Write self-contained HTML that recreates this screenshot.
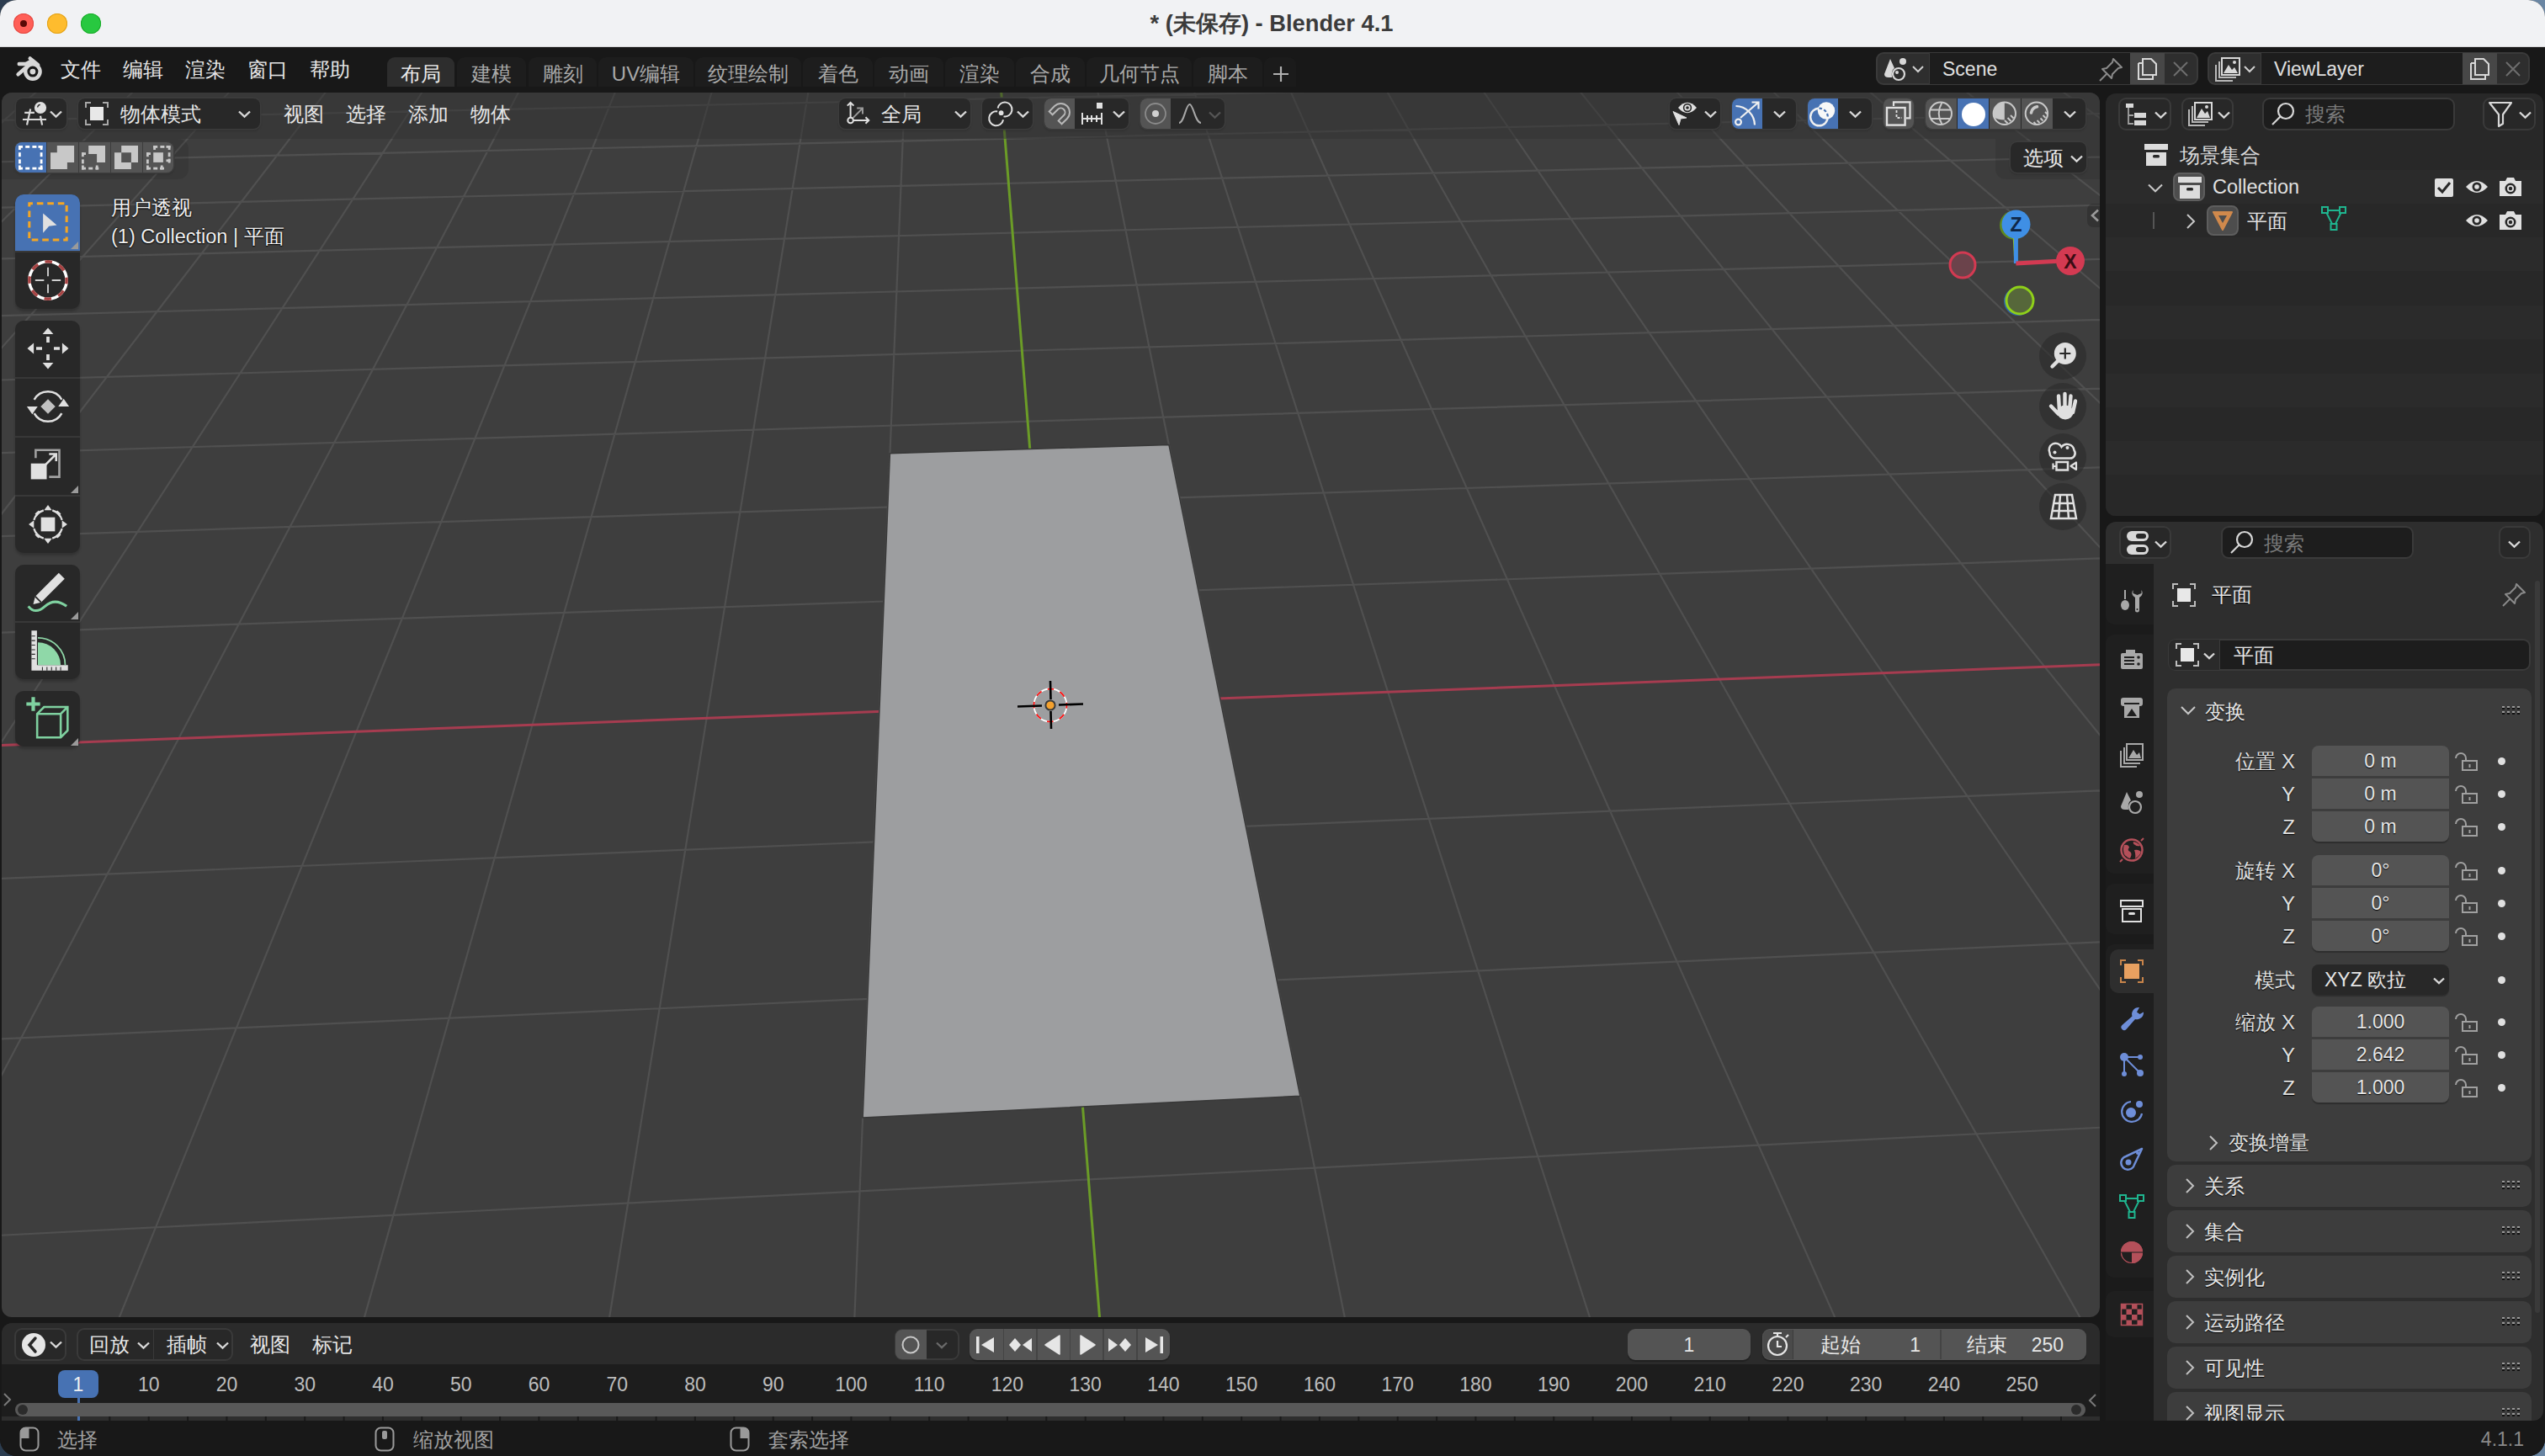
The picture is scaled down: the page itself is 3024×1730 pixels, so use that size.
<!DOCTYPE html>
<html><head><meta charset="utf-8"><style>
html,body{margin:0;padding:0;}
body{width:3024px;height:1730px;overflow:hidden;position:relative;background:linear-gradient(90deg,#2c3d50 0%,#4d6480 50%,#6a86a3 100%);font-family:"Liberation Sans",sans-serif;}
.a{position:absolute;box-sizing:border-box;}
.t{white-space:nowrap;}
.c{font-size:1.3em;vertical-align:-0.06em;}
svg{position:absolute;overflow:visible;}
</style></head><body>
<div class="a" id="win" style="left:0;top:0;width:3024px;height:1730px;border-radius:20px;overflow:hidden;background:#181818;">
<div class="a" style="left:0px;top:0px;width:3024px;height:56px;background:#f1f2f4;"></div>
<div class="a" style="left:0px;top:55px;width:3024px;height:1px;background:#d6d6d8;"></div>
<div class="a" style="left:16px;top:16px;width:24px;height:24px;border-radius:50%;background:#ff5f57;box-shadow:inset 0 0 0 1px #e2463f;"></div>
<div class="a" style="left:56px;top:16px;width:24px;height:24px;border-radius:50%;background:#febc2e;box-shadow:inset 0 0 0 1px #e1a116;"></div>
<div class="a" style="left:96px;top:16px;width:24px;height:24px;border-radius:50%;background:#28c840;box-shadow:inset 0 0 0 1px #1aab29;"></div>
<div class="a" style="left:24px;top:24px;width:8px;height:8px;border-radius:50%;background:#5a0a06;"></div>
<div class="a t" style="left:1111px;width:800px;text-align:center;top:9.0px;height:38px;line-height:38px;font-size:27.3px;color:#3b3b3b;font-weight:bold;">* (<span class="c">未保存</span>) - Blender 4.1</div>
<svg style="left:0px;top:56px" width="60" height="50" viewBox="0 56 60 50">
<path d="M35.7 69.4L45 77M22.7 76H38M21.5 88.4L30 81" stroke="#d8d8d8" stroke-width="4.4" stroke-linecap="round"/>
<path d="M30 74L37 70L48 78L36 80L29 84Z" fill="#d8d8d8"/>
<circle cx="38.9" cy="85.1" r="8.7" fill="#181818" stroke="#d8d8d8" stroke-width="4.4"/>
<circle cx="38.9" cy="85.1" r="3.4" fill="#d8d8d8"/>
</svg>
<div class="a t" style="left:72px;top:65.5px;height:33px;line-height:33px;font-size:24px;color:#e6e6e6;"><span class="c">文件</span></div>
<div class="a t" style="left:146px;top:65.5px;height:33px;line-height:33px;font-size:24px;color:#e6e6e6;"><span class="c">编辑</span></div>
<div class="a t" style="left:220px;top:65.5px;height:33px;line-height:33px;font-size:24px;color:#e6e6e6;"><span class="c">渲染</span></div>
<div class="a t" style="left:294px;top:65.5px;height:33px;line-height:33px;font-size:24px;color:#e6e6e6;"><span class="c">窗口</span></div>
<div class="a t" style="left:368px;top:65.5px;height:33px;line-height:33px;font-size:24px;color:#e6e6e6;"><span class="c">帮助</span></div>
<div class="a" style="left:460px;top:68px;width:80px;height:35px;background:#2d2d2d;border-radius:9px 9px 0 0;"></div>
<div class="a t" style="left:100.0px;width:800px;text-align:center;top:70.5px;height:33px;line-height:33px;font-size:24px;color:#ebebeb;"><span class="c">布局</span></div>
<div class="a" style="left:543px;top:68px;width:82px;height:35px;background:#1d1d1d;border-radius:9px 9px 0 0;"></div>
<div class="a t" style="left:184.0px;width:800px;text-align:center;top:70.5px;height:33px;line-height:33px;font-size:24px;color:#a9a9a9;"><span class="c">建模</span></div>
<div class="a" style="left:628px;top:68px;width:81px;height:35px;background:#1d1d1d;border-radius:9px 9px 0 0;"></div>
<div class="a t" style="left:268.5px;width:800px;text-align:center;top:70.5px;height:33px;line-height:33px;font-size:24px;color:#a9a9a9;"><span class="c">雕刻</span></div>
<div class="a" style="left:711px;top:68px;width:113px;height:35px;background:#1d1d1d;border-radius:9px 9px 0 0;"></div>
<div class="a t" style="left:367.5px;width:800px;text-align:center;top:70.5px;height:33px;line-height:33px;font-size:24px;color:#a9a9a9;">UV<span class="c">编辑</span></div>
<div class="a" style="left:826px;top:68px;width:126px;height:35px;background:#1d1d1d;border-radius:9px 9px 0 0;"></div>
<div class="a t" style="left:489.0px;width:800px;text-align:center;top:70.5px;height:33px;line-height:33px;font-size:24px;color:#a9a9a9;"><span class="c">纹理绘制</span></div>
<div class="a" style="left:954px;top:68px;width:83px;height:35px;background:#1d1d1d;border-radius:9px 9px 0 0;"></div>
<div class="a t" style="left:595.5px;width:800px;text-align:center;top:70.5px;height:33px;line-height:33px;font-size:24px;color:#a9a9a9;"><span class="c">着色</span></div>
<div class="a" style="left:1039px;top:68px;width:82px;height:35px;background:#1d1d1d;border-radius:9px 9px 0 0;"></div>
<div class="a t" style="left:680.0px;width:800px;text-align:center;top:70.5px;height:33px;line-height:33px;font-size:24px;color:#a9a9a9;"><span class="c">动画</span></div>
<div class="a" style="left:1123px;top:68px;width:82px;height:35px;background:#1d1d1d;border-radius:9px 9px 0 0;"></div>
<div class="a t" style="left:764.0px;width:800px;text-align:center;top:70.5px;height:33px;line-height:33px;font-size:24px;color:#a9a9a9;"><span class="c">渲染</span></div>
<div class="a" style="left:1207px;top:68px;width:82px;height:35px;background:#1d1d1d;border-radius:9px 9px 0 0;"></div>
<div class="a t" style="left:848.0px;width:800px;text-align:center;top:70.5px;height:33px;line-height:33px;font-size:24px;color:#a9a9a9;"><span class="c">合成</span></div>
<div class="a" style="left:1291px;top:68px;width:125px;height:35px;background:#1d1d1d;border-radius:9px 9px 0 0;"></div>
<div class="a t" style="left:953.5px;width:800px;text-align:center;top:70.5px;height:33px;line-height:33px;font-size:24px;color:#a9a9a9;"><span class="c">几何节点</span></div>
<div class="a" style="left:1418px;top:68px;width:82px;height:35px;background:#1d1d1d;border-radius:9px 9px 0 0;"></div>
<div class="a t" style="left:1059.0px;width:800px;text-align:center;top:70.5px;height:33px;line-height:33px;font-size:24px;color:#a9a9a9;"><span class="c">脚本</span></div>
<div class="a" style="left:1502px;top:68px;width:38px;height:35px;background:#1b1b1b;border-radius:9px 9px 0 0;"></div>
<svg style="left:1512px;top:78px" width="20" height="20"><path d="M10 1V19M1 10H19" stroke="#b0b0b0" stroke-width="2.2"/></svg>
<div class="a" style="left:2229px;top:62px;width:383px;height:39px;background:#2e2e2e;border-radius:9px;border:2px solid #3a3a3a;"></div>
<div class="a" style="left:2292px;top:63px;width:239px;height:37px;background:#1d1d1d;border-left:1px solid #3a3a3a;"></div>
<div class="a" style="left:2531px;top:63px;width:41px;height:37px;background:#474747;"></div>
<div class="a t" style="left:2308px;top:66.0px;height:32px;line-height:32px;font-size:23px;color:#e0e0e0;">Scene</div>
<svg style="left:2237px;top:68px" width="32" height="30" viewBox="0 0 32 30"><path d="M9 2L2 20Q2 24 7 24L11 24Q10 15 14 13Z" fill="#d8d8d8"/><circle cx="24" cy="5" r="4" fill="#d8d8d8"/><circle cx="19" cy="20" r="7" fill="none" stroke="#d8d8d8" stroke-width="2.2"/><circle cx="17" cy="18" r="2" fill="#d8d8d8"/></svg>
<svg style="left:2539px;top:68px" width="26" height="28" viewBox="0 0 26 28"><path d="M2 7H7M2 7V26H19V21" fill="none" stroke="#d8d8d8" stroke-width="2"/><path d="M7 2H17L23 8V21H7Z" fill="none" stroke="#d8d8d8" stroke-width="2"/></svg>
<svg style="left:2582px;top:73px" width="18" height="18"><path d="M1 1L17 17M17 1L1 17" stroke="#6e6e6e" stroke-width="2"/></svg>
<svg style="left:2272px;top:78px" width="14" height="9"><path d="M1 1L7 7L13 1" fill="none" stroke="#d0d0d0" stroke-width="2"/></svg>
<svg style="left:2493px;top:68px" width="30" height="30" viewBox="0 0 30 30"><path d="M2 28L11 19" stroke="#8a8a8a" stroke-width="2"/><path d="M10 13L17 6L18 2L28 12L24 13L17 20L16 25L5 14Z" fill="none" stroke="#8a8a8a" stroke-width="2" stroke-linejoin="round"/></svg>
<div class="a" style="left:2623px;top:62px;width:383px;height:39px;background:#2e2e2e;border-radius:9px;border:2px solid #3a3a3a;"></div>
<div class="a" style="left:2686px;top:63px;width:240px;height:37px;background:#1d1d1d;border-left:1px solid #3a3a3a;"></div>
<div class="a" style="left:2926px;top:63px;width:41px;height:37px;background:#474747;"></div>
<div class="a t" style="left:2702px;top:66.0px;height:32px;line-height:32px;font-size:23px;color:#e0e0e0;">ViewLayer</div>
<svg style="left:2631px;top:67px" width="32" height="32" viewBox="0 0 32 32"><rect x="9" y="2" width="21" height="20" fill="none" stroke="#d8d8d8" stroke-width="2"/><path d="M11 20L17 10L21 16L24 13L28 20Z" fill="#d8d8d8"/><circle cx="24" cy="7" r="2" fill="#d8d8d8"/><path d="M6 6V25H26M2 10V29H22" fill="none" stroke="#b8b8b8" stroke-width="2"/></svg>
<svg style="left:2934px;top:68px" width="26" height="28" viewBox="0 0 26 28"><path d="M2 7H7M2 7V26H19V21" fill="none" stroke="#d8d8d8" stroke-width="2"/><path d="M7 2H17L23 8V21H7Z" fill="none" stroke="#d8d8d8" stroke-width="2"/></svg>
<svg style="left:2977px;top:73px" width="18" height="18"><path d="M1 1L17 17M17 1L1 17" stroke="#6e6e6e" stroke-width="2"/></svg>
<svg style="left:2666px;top:78px" width="14" height="9"><path d="M1 1L7 7L13 1" fill="none" stroke="#d0d0d0" stroke-width="2"/></svg>
<svg style="left:0;top:0" width="3024" height="1730"><defs><clipPath id="vpc"><rect x="2" y="110" width="2493" height="1455" rx="12"/></clipPath></defs><rect x="2" y="110" width="2493" height="1455" rx="12" fill="#3e3e3e"/><g clip-path="url(#vpc)"><path d="M-24793.3 10213.6L193.8 -444.1M-22724.7 9885.7L242.3 -444.5M-20775.3 9576.6L290.7 -444.9M-18935.2 9284.9L339.0 -445.3M-17195.2 9009.1L387.2 -445.8M-15547.6 8748.0L435.3 -446.2M-13985.1 8500.3L483.3 -446.6M-12501.4 8265.1L531.2 -447.0M-11090.5 8041.4L579.0 -447.5M-9747.3 7828.5L626.7 -447.9M-8467.0 7625.6L674.3 -448.3M-7245.2 7431.9L721.8 -448.7M-6078.2 7246.9L769.2 -449.1M-4962.2 7070.0L816.5 -449.5M-3894.0 6900.7L863.7 -450.0M-2870.5 6738.4L910.7 -450.4M-1889.1 6582.9L957.7 -450.8M-947.2 6433.6L1004.6 -451.2M-42.5 6290.1L1051.4 -451.6M827.3 6152.3L1098.1 -452.0M2469.7 5891.9L1191.1 -452.9M3245.8 5768.9L1237.5 -453.3M3994.1 5650.3L1283.8 -453.7M4716.0 5535.9L1330.0 -454.1M5412.8 5425.4L1376.1 -454.5M6086.0 5318.7L1422.1 -454.9M6736.5 5215.6L1468.0 -455.3M7365.7 5115.8L1513.8 -455.7M7974.4 5019.3L1559.5 -456.1M8563.8 4925.9L1605.1 -456.5M9134.6 4835.4L1650.6 -456.9M9687.8 4747.7L1696.0 -457.3M10224.1 4662.7L1741.3 -457.7M10744.4 4580.2L1786.5 -458.1M11249.3 4500.2L1831.7 -458.5M11739.5 4422.5L1876.7 -458.9M12215.6 4347.0L1921.7 -459.3M12678.3 4273.7L1966.5 -459.7M13128.1 4202.4L2011.3 -460.1M13565.5 4133.1L2055.9 -460.5M-54788.3 10886.1L17188.6 2423.1M-34090.7 6545.9L14929.0 1964.9M-24578.3 4551.1L13226.4 1619.7M-19112.9 3405.0L11897.4 1350.2M-15564.9 2661.0L10831.2 1134.0M-13075.9 2139.1L9956.9 956.7M-11233.3 1752.7L9226.9 808.7M-9814.2 1455.1L8608.3 683.2M-7771.8 1026.8L7616.6 482.1M-7012.4 867.6L7213.0 400.3M-6372.6 733.4L6856.6 328.0M-5826.2 618.8L6539.6 263.8M-5354.1 519.8L6255.7 206.2M-4942.1 433.4L6000.1 154.4M-4579.5 357.4L5768.7 107.4M-4257.9 290.0L5558.2 64.7M-3970.6 229.7L5365.9 25.8M-3712.6 175.6L5189.6 -10.0M-3479.4 126.7L5027.3 -42.9M-3267.8 82.3L4877.4 -73.3M-3074.7 41.9L4738.6 -101.4M-2898.0 4.8L4609.7 -127.6M-2735.6 -29.3L4489.6 -151.9M-2585.8 -60.7L4377.5 -174.7M-2447.3 -89.7L4272.6 -195.9M-2318.7 -116.7L4174.3 -215.9M-2199.1 -141.8L4081.8 -234.6M-2087.6 -165.2L3994.8 -252.3M-1983.3 -187.0L3912.8 -268.9M-1885.6 -207.5L3835.3 -284.6M-1793.9 -226.7L3762.0 -299.5M-1707.6 -244.8L3692.5 -313.6M-1626.3 -261.9L3626.6 -327.0M-1549.5 -278.0L3563.9 -339.7M-1477.0 -293.2L3504.3 -351.7M-1408.2 -307.6L3447.6 -363.2M-1343.1 -321.3L3393.4 -374.2" stroke="#505050" stroke-width="2.2" fill="none"/><path d="M-8687.7 1218.9L8077.3 575.6" stroke="#a63c50" stroke-width="3"/><path d="M1664.1 6019.6L1144.6 -452.4" stroke="#6b9c27" stroke-width="3"/><path d="M1057.4 538.8L1388.9 528.4L1544.8 1302.2L1025.1 1327.9Z" fill="#9d9ea0" stroke="#383838" stroke-width="1.5"/><rect x="2" y="110" width="2493" height="55" fill="#323232" fill-opacity="0.5"/></g></svg>
<svg style="left:1203.2px;top:792.6px" width="90" height="90" viewBox="-45 -45 90 90">
<circle r="19.5" fill="none" stroke="#ffffff" stroke-width="1.8"/>
<circle r="19.5" fill="none" stroke="#ff1010" stroke-width="1.8" stroke-dasharray="7.6 7.7" stroke-dashoffset="3.8"/>
<path d="M-39 1.5L-10 0.5M10 -0.5L39 -1.5M0 -29L0.5 -7M0.5 7L1 28" stroke="#000" stroke-width="2.6"/>
<circle r="5.6" fill="#f4a12e" stroke="#3a3a3a" stroke-width="2"/>
</svg>
<div class="a" style="left:2px;top:165px;width:222px;height:48px;background:rgba(0,0,0,0.085);border-radius:0 12px 12px 0;"></div>
<div class="a" style="left:2371px;top:165px;width:124px;height:48px;background:rgba(0,0,0,0.085);border-radius:0 0 0 12px;"></div>
<div class="a" style="left:19px;top:117px;width:60px;height:36px;background:#282828;border-radius:8px;box-shadow:0 0 0 1.5px #3c3c3c,0 2px 3px rgba(0,0,0,0.25);"></div>
<svg style="left:25px;top:120px" width="34" height="32" viewBox="0 0 34 32"><path d="M4.2 13.9H15.9M2 22H30M11.2 9.5L7 28.6M23 17.7L25.1 28.6" stroke="#d8d8d8" stroke-width="2.2"/><circle cx="23" cy="8" r="7.1" fill="#e0e0e0"/><path d="M19.6 7.5A3.6 3.6 0 0 1 22.8 4.4" fill="none" stroke="#282828" stroke-width="1.4"/></svg>
<svg style="left:59px;top:131px" width="15" height="10"><path d="M1 1.5L7.5 7.7L14 1.5" fill="none" stroke="#d8d8d8" stroke-width="2.3"/></svg>
<div class="a" style="left:93px;top:117px;width:216px;height:36px;background:#282828;border-radius:8px;box-shadow:0 0 0 1.5px #3c3c3c,0 2px 3px rgba(0,0,0,0.25);"></div>
<svg style="left:100px;top:120px" width="30" height="30" viewBox="0 0 30 30"><path d="M2 8V2H8M22 2H28V8M28 22V28H22M8 28H2V22" fill="none" stroke="#a8a8a8" stroke-width="2"/><rect x="7" y="7" width="16" height="16" fill="#e8e8e8"/></svg>
<div class="a t" style="left:143px;top:118.5px;height:33px;line-height:33px;font-size:24px;color:#e6e6e6;"><span class="c">物体模式</span></div>
<svg style="left:283px;top:131px" width="15" height="10"><path d="M1 1.5L7.5 7.7L14 1.5" fill="none" stroke="#d8d8d8" stroke-width="2.3"/></svg>
<div class="a t" style="left:337px;top:118.5px;height:33px;line-height:33px;font-size:24px;color:#e6e6e6;"><span class="c">视图</span></div>
<div class="a t" style="left:411px;top:118.5px;height:33px;line-height:33px;font-size:24px;color:#e6e6e6;"><span class="c">选择</span></div>
<div class="a t" style="left:485px;top:118.5px;height:33px;line-height:33px;font-size:24px;color:#e6e6e6;"><span class="c">添加</span></div>
<div class="a t" style="left:559px;top:118.5px;height:33px;line-height:33px;font-size:24px;color:#e6e6e6;"><span class="c">物体</span></div>
<div class="a" style="left:997px;top:117px;width:156px;height:36px;background:#282828;border-radius:8px;box-shadow:0 0 0 1.5px #3c3c3c,0 2px 3px rgba(0,0,0,0.25);"></div>
<svg style="left:1004px;top:120px" width="32" height="30" viewBox="0 0 32 30"><path d="M6.6 19.7V1.8M2.8 5.6L6.6 1.8L10.4 5.6M9.9 23H28.3M24.5 19.2L28.3 23L24.5 26.8" fill="none" stroke="#e0e0e0" stroke-width="2"/><path d="M9 20.6L21 8.6M14.2 8.6H21V15.4" fill="none" stroke="#9a9a9a" stroke-width="2"/><circle cx="6.6" cy="23" r="3.3" fill="#282828" stroke="#e0e0e0" stroke-width="2"/></svg>
<div class="a t" style="left:1047px;top:118.5px;height:33px;line-height:33px;font-size:24px;color:#e6e6e6;"><span class="c">全局</span></div>
<svg style="left:1134px;top:131px" width="15" height="10"><path d="M1 1.5L7.5 7.7L14 1.5" fill="none" stroke="#d8d8d8" stroke-width="2.3"/></svg>
<div class="a" style="left:1167px;top:117px;width:60px;height:36px;background:#282828;border-radius:8px;box-shadow:0 0 0 1.5px #3c3c3c,0 2px 3px rgba(0,0,0,0.25);"></div>
<svg style="left:1173px;top:120px" width="32" height="30" viewBox="0 0 32 30"><path d="M12.63 8.52A8.5 8.5 0 1 1 19.52 18.37M19.07 22.28A8.5 8.5 0 1 1 12.18 12.43" fill="none" stroke="#e0e0e0" stroke-width="2"/><circle cx="16.6" cy="14.2" r="2.9" fill="#e0e0e0"/></svg>
<svg style="left:1208px;top:131px" width="15" height="10"><path d="M1 1.5L7.5 7.7L14 1.5" fill="none" stroke="#d8d8d8" stroke-width="2.3"/></svg>
<div class="a" style="left:1241px;top:117px;width:100px;height:36px;background:#282828;border-radius:8px;box-shadow:0 0 0 1.5px #3c3c3c,0 2px 3px rgba(0,0,0,0.25);"></div>
<div class="a" style="left:1241px;top:117px;width:36px;height:36px;background:#545454;border-radius:8px 0 0 8px;"></div>
<svg style="left:1244px;top:120px" width="30" height="30" viewBox="-15 -15 30 30"><path transform="translate(1.5 -1.5) rotate(45)" d="M-10.5 9L-10.5 0A10.5 10.5 0 0 1 10.5 0L10.5 9L5 9L5 0A5 5 0 0 0 -5 0L-5 9Z" fill="none" stroke="#b8b8b8" stroke-width="2" stroke-linejoin="miter"/></svg>
<svg style="left:1283px;top:120px" width="30" height="30" viewBox="0 0 30 30"><rect x="20" y="2" width="7" height="7" fill="#e0e0e0"/><path d="M3 14V28M26 14V28M3 21H26M9 17V25M14 17V25M20 17V25" stroke="#e0e0e0" stroke-width="2"/></svg>
<svg style="left:1322px;top:131px" width="15" height="10"><path d="M1 1.5L7.5 7.7L14 1.5" fill="none" stroke="#d8d8d8" stroke-width="2.3"/></svg>
<div class="a" style="left:1355px;top:117px;width:100px;height:36px;background:#282828;border-radius:8px;box-shadow:0 0 0 1.5px #3c3c3c,0 2px 3px rgba(0,0,0,0.25);"></div>
<div class="a" style="left:1355px;top:117px;width:36px;height:36px;background:#545454;border-radius:8px 0 0 8px;"></div>
<svg style="left:1359px;top:121px" width="28" height="28" viewBox="0 0 28 28"><circle cx="14" cy="14" r="12" fill="none" stroke="#8a8a8a" stroke-width="1.8"/><circle cx="14" cy="14" r="4" fill="#d0d0d0"/></svg>
<svg style="left:1399px;top:121px" width="30" height="28" viewBox="0 0 30 28"><path d="M2 25C8 25 10 3 14.5 3C19 3 21 25 28 25" fill="none" stroke="#a8a8a8" stroke-width="2"/></svg>
<svg style="left:1436px;top:132px" width="15" height="10"><path d="M1 1.5L7.5 7.7L14 1.5" fill="none" stroke="#555555" stroke-width="2.3"/></svg>
<div class="a" style="left:1984px;top:117px;width:60px;height:36px;background:#282828;border-radius:8px;box-shadow:0 0 0 1.5px #3c3c3c,0 2px 3px rgba(0,0,0,0.25);"></div>
<svg style="left:1984px;top:117px" width="60" height="36" viewBox="0 0 60 36"><path d="M10 11Q21 -1.5 32 11Q21 23.5 10 11Z" fill="#e0e0e0"/><circle cx="21" cy="11" r="5.2" fill="#282828"/><circle cx="21" cy="11" r="3.6" fill="#e0e0e0"/><circle cx="21" cy="11" r="1.8" fill="#282828"/><path d="M4 15.5L20 23L13 24L11 31.5Z" fill="#e0e0e0" stroke="#e0e0e0" stroke-width="1" stroke-linejoin="round"/></svg>
<svg style="left:2025px;top:131px" width="15" height="10"><path d="M1 1.5L7.5 7.7L14 1.5" fill="none" stroke="#d8d8d8" stroke-width="2.3"/></svg>
<div class="a" style="left:2058px;top:117px;width:76px;height:36px;background:#282828;border-radius:8px;box-shadow:0 0 0 1.5px #3c3c3c,0 2px 3px rgba(0,0,0,0.25);"></div>
<div class="a" style="left:2058px;top:117px;width:36px;height:36px;background:#4772b3;border-radius:8px 0 0 8px;"></div>
<svg style="left:2058px;top:117px" width="36" height="36" viewBox="0 0 36 36"><path d="M4.5 9A23 23 0 0 1 27 31.5" fill="none" stroke="#f0f0f0" stroke-width="2.2"/><path d="M10 23L31.5 4.5M23.5 4.5H31.5V12.5" fill="none" stroke="#f0f0f0" stroke-width="2.2"/><circle cx="7.5" cy="28" r="3.4" fill="#4772b3" stroke="#f0f0f0" stroke-width="2.2"/></svg>
<svg style="left:2107px;top:131px" width="15" height="10"><path d="M1 1.5L7.5 7.7L14 1.5" fill="none" stroke="#d8d8d8" stroke-width="2.3"/></svg>
<div class="a" style="left:2148px;top:117px;width:76px;height:36px;background:#282828;border-radius:8px;box-shadow:0 0 0 1.5px #3c3c3c,0 2px 3px rgba(0,0,0,0.25);"></div>
<div class="a" style="left:2148px;top:117px;width:36px;height:36px;background:#4772b3;border-radius:8px 0 0 8px;"></div>
<svg style="left:2148px;top:117px" width="36" height="36" viewBox="0 0 36 36"><circle cx="13.5" cy="22" r="10.3" fill="none" stroke="#f0f0f0" stroke-width="2.4"/><circle cx="22" cy="14.5" r="10.2" fill="#f8f8f8"/><path d="M13.5 11.7A10.3 10.3 0 0 1 23.8 22" fill="none" stroke="#4772b3" stroke-width="2.2" stroke-dasharray="3.5 2.5"/></svg>
<svg style="left:2197px;top:131px" width="15" height="10"><path d="M1 1.5L7.5 7.7L14 1.5" fill="none" stroke="#d8d8d8" stroke-width="2.3"/></svg>
<div class="a" style="left:2238px;top:117px;width:36px;height:36px;background:#545454;border-radius:8px;box-shadow:0 0 0 1.5px #3c3c3c,0 2px 3px rgba(0,0,0,0.25);"></div>
<svg style="left:2238px;top:117px" width="36" height="36" viewBox="0 0 36 36"><path d="M12 9V4.4H31.5V23.3H27" fill="none" stroke="#e0e0e0" stroke-width="2.2"/><rect x="4" y="11" width="21.6" height="20.6" fill="none" stroke="#e0e0e0" stroke-width="2.4"/><path d="M15.5 14V23H22" fill="none" stroke="#e0e0e0" stroke-width="1.8" stroke-dasharray="3 2"/></svg>
<div class="a" style="left:2288px;top:117px;width:190px;height:36px;background:#282828;border-radius:8px;box-shadow:0 0 0 1.5px #3c3c3c,0 2px 3px rgba(0,0,0,0.25);"></div>
<div class="a" style="left:2288px;top:117px;width:37px;height:36px;background:#545454;border-radius:8px 0 0 8px;"></div>
<div class="a" style="left:2326px;top:117px;width:37px;height:36px;background:#4772b3;border-radius:0;"></div>
<div class="a" style="left:2364px;top:117px;width:37px;height:36px;background:#545454;border-radius:0;"></div>
<div class="a" style="left:2402px;top:117px;width:37px;height:36px;background:#545454;border-radius:0;"></div>
<svg style="left:2291px;top:120px" width="30" height="30" viewBox="0 0 30 30"><circle cx="14.8" cy="14.8" r="13.2" fill="none" stroke="#c8c8c8" stroke-width="2"/><path d="M2.5 10.5H27M2.5 21H27M16.5 1.8Q9 14.8 16.5 27.8" fill="none" stroke="#c8c8c8" stroke-width="2"/></svg>
<svg style="left:2330px;top:121px" width="30" height="30" viewBox="0 0 30 30"><circle cx="15" cy="15" r="14" fill="#ffffff"/></svg>
<svg style="left:2368px;top:120px" width="30" height="30" viewBox="0 0 30 30"><circle cx="13.8" cy="14.8" r="13.2" fill="none" stroke="#c8c8c8" stroke-width="2"/><path d="M13.8 1.6A13.2 13.2 0 0 0 1.4 19.5Q6 22.5 13.8 22.5Z" fill="#c8c8c8"/><path d="M14 23L17.5 26.5M17.5 20L21.5 24M21 17L24.5 20.5" stroke="#c8c8c8" stroke-width="2"/></svg>
<svg style="left:2406px;top:120px" width="30" height="30" viewBox="0 0 30 30"><circle cx="13.9" cy="14.8" r="13.2" fill="none" stroke="#c8c8c8" stroke-width="2"/><path d="M7.5 14A9 9 0 0 1 14.5 6.8" fill="none" stroke="#c8c8c8" stroke-width="3.6" stroke-linecap="round"/><path d="M10.5 25L13 27.5M14.5 23L17.5 26M18.5 20.5L21.5 23.5M21.5 17L24.5 20M24 13L26.5 15.5" stroke="#c8c8c8" stroke-width="1.8"/></svg>
<svg style="left:2452px;top:131px" width="15" height="10"><path d="M1 1.5L7.5 7.7L14 1.5" fill="none" stroke="#d8d8d8" stroke-width="2.3"/></svg>
<div class="a" style="left:18px;top:169px;width:188px;height:36px;background:#545454;border-radius:8px;box-shadow:0 0 0 1.5px #3c3c3c,0 2px 3px rgba(0,0,0,0.25);"></div>
<div class="a" style="left:18px;top:169px;width:37px;height:36px;background:#4772b3;border-radius:8px 0 0 8px;"></div>
<div class="a" style="left:55px;top:169px;width:1px;height:36px;background:#3c3c3c;"></div>
<div class="a" style="left:93px;top:169px;width:1px;height:36px;background:#3c3c3c;"></div>
<div class="a" style="left:131px;top:169px;width:1px;height:36px;background:#3c3c3c;"></div>
<div class="a" style="left:169px;top:169px;width:1px;height:36px;background:#3c3c3c;"></div>
<svg style="left:21.7px;top:173px" width="29" height="29" viewBox="0 0 29 29"><rect x="0" y="0" width="5" height="2.8" fill="#ffffff"/><rect x="0" y="0" width="2.8" height="5" fill="#ffffff"/><rect x="8.2" y="0" width="5" height="2.8" fill="#ffffff"/><rect x="16.4" y="0" width="5" height="2.8" fill="#ffffff"/><rect x="23.5" y="0" width="5" height="2.8" fill="#ffffff"/><rect x="25.7" y="0" width="2.8" height="5" fill="#ffffff"/><rect x="0" y="8.2" width="2.8" height="5" fill="#ffffff"/><rect x="0" y="16.4" width="2.8" height="5" fill="#ffffff"/><rect x="25.7" y="8.2" width="2.8" height="5" fill="#ffffff"/><rect x="25.7" y="16.4" width="2.8" height="5" fill="#ffffff"/><rect x="0" y="25.7" width="5" height="2.8" fill="#ffffff"/><rect x="0" y="23.5" width="2.8" height="5" fill="#ffffff"/><rect x="8.2" y="25.7" width="5" height="2.8" fill="#ffffff"/><rect x="16.4" y="25.7" width="5" height="2.8" fill="#ffffff"/><rect x="23.5" y="25.7" width="5" height="2.8" fill="#ffffff"/><rect x="25.7" y="23.5" width="2.8" height="5" fill="#ffffff"/></svg>
<svg style="left:60.1px;top:173px" width="29" height="29" viewBox="0 0 29 29"><path d="M0 8.2H7.8V0H28.1V19.9H19.9V28H0Z" fill="#c8c8c8"/></svg>
<svg style="left:96.8px;top:173px" width="29" height="29" viewBox="0 0 29 29"><path d="M8.2 0H28V19.9H18.1V9.9H8.2Z" fill="#c8c8c8"/><rect x="0" y="8.2" width="5" height="2.8" fill="#c8c8c8"/><rect x="0" y="8.2" width="2.8" height="5" fill="#c8c8c8"/><rect x="0" y="16.4" width="2.8" height="5" fill="#c8c8c8"/><rect x="0" y="25.7" width="5" height="2.8" fill="#c8c8c8"/><rect x="0" y="23.5" width="2.8" height="5" fill="#c8c8c8"/><rect x="8.2" y="25.7" width="5" height="2.8" fill="#c8c8c8"/><rect x="16.4" y="25.7" width="3.9" height="2.8" fill="#c8c8c8"/><rect x="16.8" y="23.5" width="2.8" height="5" fill="#c8c8c8"/></svg>
<svg style="left:136.2px;top:173px" width="29" height="29" viewBox="0 0 29 29"><path d="M8.2 0H28V19.9H8.2ZM0 8.2H19.9V28H0Z" fill="#c8c8c8" fill-rule="evenodd"/></svg>
<svg style="left:173.8px;top:173px" width="29" height="29" viewBox="0 0 29 29"><rect x="8.2" y="0" width="5" height="2.8" fill="#c8c8c8"/><rect x="8.2" y="0" width="2.8" height="5" fill="#c8c8c8"/><rect x="16.4" y="0" width="5" height="2.8" fill="#c8c8c8"/><rect x="23.5" y="0" width="5" height="2.8" fill="#c8c8c8"/><rect x="25.7" y="0" width="2.8" height="5" fill="#c8c8c8"/><rect x="25.7" y="8.2" width="2.8" height="5" fill="#c8c8c8"/><rect x="23.5" y="16.4" width="5" height="2.8" fill="#c8c8c8"/><rect x="25.7" y="15.6" width="2.8" height="5" fill="#c8c8c8"/><rect x="0" y="8.2" width="5" height="2.8" fill="#c8c8c8"/><rect x="0" y="8.2" width="2.8" height="5" fill="#c8c8c8"/><rect x="0" y="16.4" width="2.8" height="5" fill="#c8c8c8"/><rect x="0" y="25.7" width="5" height="2.8" fill="#c8c8c8"/><rect x="0" y="23.5" width="2.8" height="5" fill="#c8c8c8"/><rect x="8.2" y="25.7" width="5" height="2.8" fill="#c8c8c8"/><rect x="16" y="25.7" width="5" height="2.8" fill="#c8c8c8"/><rect x="16.8" y="23.5" width="2.8" height="5" fill="#c8c8c8"/><rect x="8.2" y="8.2" width="11.7" height="11.7" fill="#c8c8c8"/></svg>
<div class="a" style="left:2389px;top:169px;width:90px;height:36px;background:#282828;border-radius:8px;box-shadow:0 0 0 1.5px #3c3c3c,0 2px 3px rgba(0,0,0,0.25);"></div>
<div class="a t" style="left:2404px;top:170.5px;height:33px;line-height:33px;font-size:24px;color:#e6e6e6;"><span class="c">选项</span></div>
<svg style="left:2460px;top:184px" width="15" height="10"><path d="M1 1.5L7.5 7.7L14 1.5" fill="none" stroke="#d8d8d8" stroke-width="2.3"/></svg>
<div class="a" style="left:18px;top:231px;width:77px;height:136px;background:#282828;border-radius:10px;box-shadow:0 3px 3px rgba(0,0,0,0.2);"></div>
<div class="a" style="left:18px;top:381px;width:77px;height:276px;background:#282828;border-radius:10px;box-shadow:0 3px 3px rgba(0,0,0,0.2);"></div>
<div class="a" style="left:18px;top:671px;width:77px;height:136px;background:#282828;border-radius:10px;box-shadow:0 3px 3px rgba(0,0,0,0.2);"></div>
<div class="a" style="left:18px;top:821px;width:77px;height:66px;background:#282828;border-radius:10px;box-shadow:0 3px 3px rgba(0,0,0,0.2);"></div>
<div class="a" style="left:18px;top:231px;width:77px;height:67px;background:#4772b3;border-radius:10px 10px 0 0;"></div>
<div class="a" style="left:18px;top:298px;width:77px;height:2px;background:#383838;"></div>
<div class="a" style="left:18px;top:448px;width:77px;height:2px;background:#383838;"></div>
<div class="a" style="left:18px;top:518px;width:77px;height:2px;background:#383838;"></div>
<div class="a" style="left:18px;top:588px;width:77px;height:2px;background:#383838;"></div>
<div class="a" style="left:18px;top:738px;width:77px;height:2px;background:#383838;"></div>
<svg style="left:28.5px;top:236.0px" width="56" height="56" viewBox="0 0 48 48"><rect x="5" y="5" width="38" height="37" fill="none" stroke="#f5a623" stroke-width="2.6" stroke-dasharray="6.5 4.2" stroke-dashoffset="3"/><path d="M19 15L33 27L25 28L19 35Z" fill="#e0e0e0"/></svg>
<svg style="left:84px;top:287px" width="10" height="10"><path d="M9 0V9H0Z" fill="#9a9a9a"/></svg>
<svg style="left:28.5px;top:305.0px" width="56" height="56" viewBox="0 0 48 48"><circle cx="24" cy="24" r="19" fill="none" stroke="#ffffff" stroke-width="3"/><circle cx="24" cy="24" r="19" fill="none" stroke="#a84444" stroke-width="3" stroke-dasharray="7.46 7.46" stroke-dashoffset="3.7"/><path d="M24 11V20M24 28V37M11 24H20M28 24H37" stroke="#d0d0d0" stroke-width="1.6"/></svg>
<svg style="left:28.5px;top:386.0px" width="56" height="56" viewBox="0 0 48 48"><path d="M24 3L18.5 9.5H29.5ZM24 45L18.5 38.5H29.5ZM3 24L9.5 18.5V29.5ZM45 24L38.5 18.5V29.5Z" fill="#e0e0e0"/><path d="M24 12V18M24 30V36M12 24H18M30 24H36" stroke="#e0e0e0" stroke-width="3.2"/></svg>
<svg style="left:28.5px;top:455.0px" width="56" height="56" viewBox="0 0 48 48"><path d="M10 17A16 16 0 0 1 38 17M38 31A16 16 0 0 1 10 31" fill="none" stroke="#e0e0e0" stroke-width="2.2"/><path d="M24 16.5L31.5 24L24 31.5L16.5 24Z" fill="#c0c0c0"/><path d="M2.5 24H13.5L8 32ZM34.5 24H45.5L40 16Z" fill="#e0e0e0"/></svg>
<svg style="left:33.0px;top:530.5px" width="45" height="45" viewBox="0 0 48 48"><path d="M10 14V4H40V38H27" fill="none" stroke="#a0a0a0" stroke-width="2.8"/><rect x="4" y="21" width="20" height="20" fill="#e0e0e0"/><path d="M22 23L35 10M27 9H36V18" fill="none" stroke="#e0e0e0" stroke-width="2.8"/></svg>
<svg style="left:84px;top:577px" width="10" height="10"><path d="M9 0V9H0Z" fill="#9a9a9a"/></svg>
<svg style="left:31.5px;top:598.0px" width="50" height="50" viewBox="0 0 48 48"><path d="M10 13A18 18 0 0 1 14 9M34 9A18 18 0 0 1 38 13M38 35A18 18 0 0 1 34 39M14 39A18 18 0 0 1 10 35" fill="none" stroke="#e0e0e0" stroke-width="2.2"/><path d="M13 16A14 14 0 0 1 16 13M32 13A14 14 0 0 1 35 16" fill="none" stroke="#e0e0e0" stroke-width="0"/><path d="M8 19A17 17 0 0 1 19 8M29 8A17 17 0 0 1 40 19M40 29A17 17 0 0 1 29 40M19 40A17 17 0 0 1 8 29" fill="none" stroke="#e0e0e0" stroke-width="2.2"/><rect x="16" y="16" width="16" height="16" fill="#e0e0e0"/><path d="M24 2L19.5 8H28.5ZM24 46L19.5 40H28.5ZM2 24L8 19.5V28.5ZM46 24L40 19.5V28.5Z" fill="#e0e0e0"/></svg>
<svg style="left:28.5px;top:676.0px" width="56" height="56" viewBox="0 0 48 48"><path d="M35 4L41 10L17 34L9 36L11 28Z" fill="#e0e0e0"/><path d="M11 28L17 34" stroke="#282828" stroke-width="1.5"/><path d="M4 38Q11 47 21 38T43 38" fill="none" stroke="#7fd1a0" stroke-width="2.6"/></svg>
<svg style="left:84px;top:727px" width="10" height="10"><path d="M9 0V9H0Z" fill="#9a9a9a"/></svg>
<svg style="left:32.0px;top:747.0px" width="52" height="52" viewBox="0 0 48 48"><path d="M5 2V46H45V40H11V2Z" fill="#e0e0e0"/><path d="M12 15A25 25 0 0 1 37 40H12Z" fill="#8fd8a8"/><path d="M12 10A30 30 0 0 1 42 40" fill="none" stroke="#8fd8a8" stroke-width="1.6"/><path d="M5 8H9M5 13H9M5 18H9M5 23H9M5 28H9M5 33H9M17 42V46M22 42V46M27 42V46M32 42V46M37 42V46" stroke="#282828" stroke-width="1"/></svg>
<svg style="left:28.5px;top:826.0px" width="56" height="56" viewBox="0 0 48 48"><path d="M9 2V16M2 9H16" stroke="#7fd1a0" stroke-width="3.6"/><path d="M13 19L20 12H44V36L37 43H13ZM13 19H37V43M37 19L44 12" fill="none" stroke="#7fd1a0" stroke-width="2.2"/></svg>
<svg style="left:84px;top:877px" width="10" height="10"><path d="M9 0V9H0Z" fill="#9a9a9a"/></svg>
<div class="a t" style="left:132px;top:229.5px;height:33px;line-height:33px;font-size:24px;color:#f0f0f0;text-shadow:0 0 2px #000,0 1px 1px #000;"><span class="c">用户透视</span></div>
<div class="a t" style="left:132px;top:265.0px;height:32px;line-height:32px;font-size:23.5px;color:#f0f0f0;text-shadow:0 0 2px #000,0 1px 1px #000;">(1) Collection | <span class="c">平面</span></div>
<svg style="left:2300px;top:240px" width="190" height="140" viewBox="2300 240 190 140">
<circle cx="2393" cy="267.5" r="17" fill="#5f8a1e"/>
<circle cx="2398" cy="358" r="17" fill="#2f65a6"/>
<path d="M2395.4 313L2393 270" stroke="#8fc22f" stroke-width="4"/>
<path d="M2395.4 313V270" stroke="#3f8fe5" stroke-width="5"/>
<path d="M2395.4 313L2450 310" stroke="#d33a52" stroke-width="5"/>
<circle cx="2332" cy="315" r="15" fill="#6b434b" stroke="#d33a52" stroke-width="3"/>
<circle cx="2400" cy="357" r="16" fill="#56673a" stroke="#8fd019" stroke-width="3"/>
<circle cx="2395.5" cy="266.5" r="17" fill="#3f8fe5"/>
<circle cx="2460" cy="310" r="17" fill="#d33a52"/>
<text x="2395.5" y="275" text-anchor="middle" font-family="Liberation Sans" font-weight="bold" font-size="23" fill="#0f2748">Z</text>
<text x="2460" y="318.5" text-anchor="middle" font-family="Liberation Sans" font-weight="bold" font-size="23" fill="#3a0c14">X</text>
</svg>
<div class="a" style="left:2423px;top:395px;width:56px;height:56px;border-radius:50%;background:rgba(40,40,40,0.55);"></div>
<div class="a" style="left:2423px;top:454.5px;width:56px;height:56px;border-radius:50%;background:rgba(40,40,40,0.55);"></div>
<div class="a" style="left:2423px;top:514.5px;width:56px;height:56px;border-radius:50%;background:rgba(40,40,40,0.55);"></div>
<div class="a" style="left:2423px;top:574px;width:56px;height:56px;border-radius:50%;background:rgba(40,40,40,0.55);"></div>
<svg style="left:2433px;top:403px" width="40" height="40" viewBox="0 0 40 40"><circle cx="20.8" cy="17" r="13" fill="#e0e0e0"/><path d="M13 25L5.5 32.5" stroke="#e0e0e0" stroke-width="4.4" stroke-linecap="round"/><path d="M20.8 10.5V23.5M14.3 17H27.3" stroke="#282828" stroke-width="2.2"/></svg>
<svg style="left:2433px;top:462px" width="40" height="40" viewBox="0 0 40 40"><g stroke="#e0e0e0" stroke-width="4.4" stroke-linecap="round"><path d="M13 8.5L14 26M20.5 6V25M27.5 8.5L26 26M33 14.5L30 28M4 20.5L13 30"/></g><ellipse cx="21" cy="28" rx="9.5" ry="8.5" fill="#e0e0e0"/></svg>
<svg style="left:2431px;top:522px" width="42" height="42" viewBox="0 0 42 42"><path d="M10 22.5H28A6 6 0 0 0 33.5 13A8.5 8.5 0 0 0 18.5 9A6.5 6.5 0 0 0 4.5 16A6.5 6.5 0 0 0 10 22.5Z" fill="none" stroke="#e0e0e0" stroke-width="2.5"/><circle cx="10.5" cy="15.5" r="2" fill="#e0e0e0"/><circle cx="25.5" cy="10" r="2" fill="#e0e0e0"/><rect x="12.5" y="27" width="13.5" height="9.5" fill="none" stroke="#e0e0e0" stroke-width="2.5"/><path d="M8.5 28.5V35.5M8.5 32H12.5" stroke="#e0e0e0" stroke-width="2.2"/><path d="M36 27.5V36L29.5 31.75Z" fill="none" stroke="#e0e0e0" stroke-width="2.2" stroke-linejoin="round"/></svg>
<svg style="left:2432px;top:582px" width="40" height="40" viewBox="0 0 40 40"><path d="M10 6H30L35 34H5ZM8 16H32M6 25H34M16 6L14 34M24 6L26 34" fill="none" stroke="#e0e0e0" stroke-width="2.5"/></svg>
<div class="a" style="left:2480px;top:242px;width:15px;height:28px;background:rgba(25,25,25,0.3);border-radius:7px 0 0 7px;"></div>
<svg style="left:2483px;top:248px" width="12" height="16"><path d="M10 1.5L3 8L10 14.5" fill="none" stroke="#9a9a9a" stroke-width="2.6"/></svg>
<div class="a" style="left:2502px;top:111px;width:520px;height:502px;background:#282828;border-radius:12px;overflow:hidden;"></div>
<div class="a" style="left:2502px;top:202px;width:520px;height:40px;background:#2b2b2b;"></div>
<div class="a" style="left:2502px;top:282px;width:520px;height:40px;background:#2b2b2b;"></div>
<div class="a" style="left:2502px;top:363px;width:520px;height:40px;background:#2b2b2b;"></div>
<div class="a" style="left:2502px;top:444px;width:520px;height:40px;background:#2b2b2b;"></div>
<div class="a" style="left:2502px;top:524px;width:520px;height:40px;background:#2b2b2b;"></div>
<div class="a" style="left:2502px;top:592px;width:520px;height:21px;background:#282828;border-radius:0 0 12px 12px;"></div>
<div class="a" style="left:2517px;top:116px;width:63px;height:39px;background:#282828;border-radius:9px;border:2px solid #3a3a3a;"></div>
<svg style="left:2524px;top:121px" width="32" height="30" viewBox="0 0 32 30"><rect x="2" y="2" width="9" height="5" fill="#d8d8d8"/><path d="M5 7V26H11M5 16H11" fill="none" stroke="#a0a0a0" stroke-width="1.8"/><rect x="12" y="13" width="14" height="6" fill="#d8d8d8"/><rect x="12" y="22" width="14" height="6" fill="#d8d8d8"/></svg>
<svg style="left:2560px;top:132px" width="15" height="10"><path d="M1 1.5L7.5 7.7L14 1.5" fill="none" stroke="#d8d8d8" stroke-width="2.3"/></svg>
<div class="a" style="left:2592px;top:116px;width:62px;height:39px;background:#282828;border-radius:9px;border:2px solid #3a3a3a;"></div>
<svg style="left:2599px;top:120px" width="32" height="32" viewBox="0 0 32 32"><rect x="9" y="2" width="20" height="20" fill="none" stroke="#d8d8d8" stroke-width="2"/><path d="M11 20L17 9L21 15L24 12L27 20Z" fill="#d8d8d8"/><circle cx="23" cy="7" r="2" fill="#d8d8d8"/><path d="M6 6V25H25M2 10V29H21" fill="none" stroke="#b8b8b8" stroke-width="2"/></svg>
<svg style="left:2635px;top:132px" width="15" height="10"><path d="M1 1.5L7.5 7.7L14 1.5" fill="none" stroke="#d8d8d8" stroke-width="2.3"/></svg>
<div class="a" style="left:2688px;top:116px;width:229px;height:39px;background:#1d1d1d;border-radius:9px;border:2px solid #3a3a3a;"></div>
<svg style="left:2697px;top:120px" width="32" height="32" viewBox="0 0 32 32"><circle cx="19" cy="12" r="9" fill="none" stroke="#d8d8d8" stroke-width="2.2"/><path d="M13 18L3 28" stroke="#d8d8d8" stroke-width="2.2"/></svg>
<div class="a t" style="left:2739px;top:118.5px;height:33px;line-height:33px;font-size:24px;color:#7a7a7a;"><span class="c">搜索</span></div>
<div class="a" style="left:2950px;top:116px;width:63px;height:39px;background:#282828;border-radius:9px;border:2px solid #3a3a3a;"></div>
<svg style="left:2955px;top:119px" width="34" height="34" viewBox="0 0 34 34"><path d="M3 3H29L19 17V28L14 31V17Z" fill="none" stroke="#d8d8d8" stroke-width="2.2" stroke-linejoin="round"/></svg>
<svg style="left:2993px;top:132px" width="15" height="10"><path d="M1 1.5L7.5 7.7L14 1.5" fill="none" stroke="#d8d8d8" stroke-width="2.3"/></svg>
<svg style="left:2547px;top:170px" width="30" height="28" viewBox="0 0 30 28"><rect x="1" y="1" width="28" height="7" fill="#dcdcdc"/><rect x="3" y="11" width="24" height="16" fill="#dcdcdc"/><rect x="11" y="14" width="8" height="3.5" rx="1.5" fill="#282828"/></svg>
<div class="a t" style="left:2590px;top:167.5px;height:33px;line-height:33px;font-size:24px;color:#d8d8d8;"><span class="c">场景集合</span></div>
<svg style="left:2552px;top:218px" width="18" height="12"><path d="M1 1.5L9.0 9.3L17 1.5" fill="none" stroke="#c8c8c8" stroke-width="2"/></svg>
<div class="a" style="left:2582px;top:205px;width:38px;height:34px;background:#4d4d4d;border-radius:8px;border:2px solid #5e5e5e;"></div>
<svg style="left:2587px;top:209px" width="30" height="28" viewBox="0 0 30 28"><rect x="1" y="1" width="28" height="7" fill="#dcdcdc"/><rect x="3" y="11" width="24" height="16" fill="#dcdcdc"/><rect x="11" y="14" width="8" height="3.5" rx="1.5" fill="#282828"/></svg>
<div class="a t" style="left:2629px;top:206.0px;height:32px;line-height:32px;font-size:23.5px;color:#e0e0e0;">Collection</div>
<svg style="left:2893px;top:212px" width="22" height="22" viewBox="0 0 22 22"><rect x="0" y="0" width="22" height="22" rx="2" fill="#e0e0e0"/><path d="M4 11L9 16L18 5" fill="none" stroke="#282828" stroke-width="3"/></svg>
<svg style="left:2929px;top:212px" width="28" height="20" viewBox="0 0 28 20"><path d="M1 10Q14 -4 27 10Q14 24 1 10Z" fill="#e0e0e0"/><circle cx="14" cy="10" r="5.5" fill="#282828"/><circle cx="14" cy="10" r="2.8" fill="#e0e0e0"/></svg>
<svg style="left:2969px;top:210px" width="28" height="24" viewBox="0 0 28 24"><path d="M1 5H8L10 1H18L20 5H27V23H1Z" fill="#e0e0e0"/><circle cx="14" cy="14" r="6.5" fill="#282828"/><circle cx="14" cy="14" r="4" fill="#e0e0e0"/><circle cx="14" cy="14" r="2.2" fill="#282828"/></svg>
<div class="a" style="left:2558px;top:252px;width:2px;height:20px;background:#555555;"></div>
<svg style="left:2597px;top:254px" width="12" height="18"><path d="M2 1L10 9L2 17" fill="none" stroke="#c8c8c8" stroke-width="2"/></svg>
<div class="a" style="left:2622px;top:244px;width:38px;height:36px;background:#4d4d4d;border-radius:8px;border:2px solid #5e5e5e;"></div>
<svg style="left:2628px;top:249px" width="26" height="26" viewBox="0 0 26 26"><path d="M2 3H24L13 24Z" fill="#d0894c" stroke="#d0894c" stroke-width="2" stroke-linejoin="round"/><path d="M8 7H18L13 16Z" fill="#4d4d4d"/></svg>
<div class="a t" style="left:2670px;top:245.5px;height:33px;line-height:33px;font-size:24px;color:#e0e0e0;"><span class="c">平面</span></div>
<svg style="left:2758px;top:245px" width="30" height="30" viewBox="0 0 30 30"><path d="M5 5H25L15 25Z" fill="none" stroke="#1fb58f" stroke-width="2"/><rect x="1" y="1" width="7" height="7" fill="#282828" stroke="#1fb58f" stroke-width="2"/><rect x="22" y="1" width="7" height="7" fill="#282828" stroke="#1fb58f" stroke-width="2"/><rect x="11.5" y="21" width="7" height="7" fill="#282828" stroke="#1fb58f" stroke-width="2"/></svg>
<svg style="left:2929px;top:252px" width="28" height="20" viewBox="0 0 28 20"><path d="M1 10Q14 -4 27 10Q14 24 1 10Z" fill="#e0e0e0"/><circle cx="14" cy="10" r="5.5" fill="#282828"/><circle cx="14" cy="10" r="2.8" fill="#e0e0e0"/></svg>
<svg style="left:2969px;top:250px" width="28" height="24" viewBox="0 0 28 24"><path d="M1 5H8L10 1H18L20 5H27V23H1Z" fill="#e0e0e0"/><circle cx="14" cy="14" r="6.5" fill="#282828"/><circle cx="14" cy="14" r="4" fill="#e0e0e0"/><circle cx="14" cy="14" r="2.2" fill="#282828"/></svg>
<div class="a" style="left:2502px;top:620px;width:520px;height:1068px;background:#2e2e2e;border-radius:12px;overflow:hidden;"></div>
<div class="a" style="left:2518px;top:625px;width:62px;height:39px;background:#282828;border-radius:9px;border:2px solid #3a3a3a;"></div>
<svg style="left:2525px;top:628px" width="32" height="34" viewBox="0 0 32 34"><rect x="2" y="3" width="26" height="12" rx="6" fill="#d8d8d8"/><rect x="13" y="6" width="12" height="6" rx="3" fill="#282828"/><rect x="2" y="19" width="26" height="12" rx="6" fill="#d8d8d8"/><rect x="13" y="22" width="12" height="6" rx="3" fill="#282828"/></svg>
<svg style="left:2560px;top:642px" width="15" height="10"><path d="M1 1.5L7.5 7.7L14 1.5" fill="none" stroke="#d8d8d8" stroke-width="2.3"/></svg>
<div class="a" style="left:2639px;top:625px;width:229px;height:39px;background:#1d1d1d;border-radius:9px;border:2px solid #3a3a3a;"></div>
<svg style="left:2648px;top:629px" width="32" height="32" viewBox="0 0 32 32"><circle cx="19" cy="12" r="9" fill="none" stroke="#d8d8d8" stroke-width="2.2"/><path d="M13 18L3 28" stroke="#d8d8d8" stroke-width="2.2"/></svg>
<div class="a t" style="left:2690px;top:628.5px;height:33px;line-height:33px;font-size:24px;color:#7a7a7a;"><span class="c">搜索</span></div>
<div class="a" style="left:2969px;top:625px;width:38px;height:39px;background:#282828;border-radius:9px;border:2px solid #3a3a3a;"></div>
<svg style="left:2980px;top:642px" width="15" height="10"><path d="M1 1.5L7.5 7.7L14 1.5" fill="none" stroke="#d8d8d8" stroke-width="2.3"/></svg>
<div class="a" style="left:2502px;top:670px;width:57px;height:1018px;background:#1b1b1b;"></div>
<div class="a" style="left:2502px;top:670px;width:57px;height:72px;background:#1f1f1f;border-radius:0 0 0 10px;"></div>
<div class="a" style="left:2502px;top:754px;width:57px;height:284px;background:#1f1f1f;border-radius:10px 0 0 10px;"></div>
<div class="a" style="left:2502px;top:1050px;width:57px;height:60px;background:#1f1f1f;border-radius:10px 0 0 10px;"></div>
<div class="a" style="left:2502px;top:1122px;width:57px;height:396px;background:#1f1f1f;border-radius:10px 0 0 10px;"></div>
<div class="a" style="left:2502px;top:1534px;width:57px;height:55px;background:#1f1f1f;border-radius:10px 0 0 10px;"></div>
<div class="a" style="left:2507px;top:1128px;width:52px;height:52px;background:#2e2e2e;border-radius:10px 0 0 10px;"></div>
<svg style="left:2518px;top:699.0px" width="30" height="30" viewBox="0 0 30 30"><path d="M7 2V13" stroke="#a8a8a8" stroke-width="2"/><ellipse cx="7" cy="20" rx="5" ry="6" fill="#a8a8a8"/><path d="M16.5 2A6 6 0 0 0 19 11V26A2.5 2.5 0 0 0 24 26V11A6 6 0 0 0 26.5 2V6L21.5 8L16.5 6Z" fill="#a8a8a8"/><circle cx="21.5" cy="25" r="1" fill="#1f1f1f"/></svg>
<svg style="left:2518px;top:769.0px" width="30" height="30" viewBox="0 0 30 30"><rect x="2" y="7" width="26" height="19" rx="2" fill="#a8a8a8"/><rect x="8" y="3" width="11" height="5" fill="#a8a8a8"/><path d="M6 12H18M6 16H18M6 20H18" stroke="#1f1f1f" stroke-width="2"/><circle cx="23" cy="12" r="1.8" fill="#1f1f1f"/><circle cx="23" cy="20" r="1.8" fill="#1f1f1f"/></svg>
<svg style="left:2518px;top:826.0px" width="30" height="30" viewBox="0 0 30 30"><rect x="2" y="3" width="26" height="10" rx="3" fill="#a8a8a8"/><rect x="6" y="10" width="18" height="17" fill="#a8a8a8"/><path d="M9 25L15 16L21 25Z" fill="#1f1f1f"/><rect x="6" y="9" width="18" height="2" fill="#1f1f1f"/></svg>
<svg style="left:2518px;top:882.0px" width="30" height="30" viewBox="0 0 30 30"><rect x="9" y="2" width="19" height="19" fill="none" stroke="#a8a8a8" stroke-width="2"/><path d="M11 19L17 9L21 15L24 12L26 19Z" fill="#a8a8a8"/><path d="M6 6V25H25M2 10V29H21" fill="none" stroke="#a8a8a8" stroke-width="2"/></svg>
<svg style="left:2518px;top:938.0px" width="30" height="30" viewBox="0 0 30 30"><path d="M9 3L2 20Q2 24 7 24L11 24Q10 15 14 13Z" fill="#a8a8a8"/><circle cx="24" cy="6" r="4" fill="#a8a8a8"/><circle cx="19" cy="21" r="7" fill="none" stroke="#a8a8a8" stroke-width="2.2"/></svg>
<svg style="left:2518px;top:995.0px" width="30" height="30" viewBox="0 0 30 30"><circle cx="15" cy="15" r="12.5" fill="none" stroke="#b4505a" stroke-width="2.5"/><path d="M6 9Q11 8 12 12Q9 15 13 17Q16 19 13 25Q9 24 6 20Q4 14 6 9Z" fill="#b4505a"/><path d="M17 5Q22 6 25 10Q21 11 19 9Q16 8 17 5ZM18 15Q23 14 26 17Q24 23 19 25Q20 20 18 15Z" fill="#b4505a"/><path d="M4 26L1 29M26 4L29 1" stroke="#b4505a" stroke-width="2"/></svg>
<svg style="left:2518px;top:1068.0px" width="30" height="30" viewBox="0 0 30 30"><rect x="2" y="2" width="26" height="7" fill="none" stroke="#e0e0e0" stroke-width="2"/><rect x="4" y="12" width="22" height="15" fill="none" stroke="#e0e0e0" stroke-width="2"/><rect x="11" y="16" width="8" height="3" rx="1.5" fill="#e0e0e0"/></svg>
<svg style="left:2518px;top:1139.0px" width="30" height="30" viewBox="0 0 30 30"><path d="M2 8V2H8M22 2H28V8M28 22V28H22M8 28H2V22" fill="none" stroke="#c8844a" stroke-width="2"/><rect x="6" y="6" width="18" height="18" fill="#e8a060"/></svg>
<svg style="left:2518px;top:1194.5px" width="30" height="30" viewBox="0 0 30 30"><path d="M24 2A8 8 0 0 0 15.5 12.5L3.5 23A3.5 3.5 0 0 0 8.5 28L19 16A8 8 0 0 0 29 7.5L24.5 10L21 7.5Z" fill="#6e8ed8"/></svg>
<svg style="left:2518px;top:1249.7px" width="30" height="30" viewBox="0 0 30 30"><circle cx="6" cy="6" r="5" fill="#6e8ed8"/><circle cx="25" cy="6" r="3" fill="#6e8ed8"/><circle cx="6" cy="26" r="3" fill="#6e8ed8"/><circle cx="25" cy="25" r="4" fill="#6e8ed8"/><path d="M6 6H25M6 6V26M6 6L25 25" stroke="#6e8ed8" stroke-width="2"/></svg>
<svg style="left:2518px;top:1306.0px" width="30" height="30" viewBox="0 0 30 30"><path d="M14 3A12 12 0 1 0 27 17" fill="none" stroke="#6e8ed8" stroke-width="2.2"/><circle cx="14" cy="16" r="6" fill="#6e8ed8"/><circle cx="24" cy="6" r="4" fill="#6e8ed8"/></svg>
<svg style="left:2518px;top:1362.0px" width="30" height="30" viewBox="0 0 30 30"><path d="M27 3L8 12A8 8 0 1 0 18 22Z" fill="none" stroke="#6e8ed8" stroke-width="2.5" stroke-linejoin="round"/><circle cx="11" cy="19" r="3.5" fill="#6e8ed8"/><circle cx="22" cy="8" r="2" fill="#6e8ed8"/></svg>
<svg style="left:2518px;top:1419.0px" width="30" height="30" viewBox="0 0 30 30"><path d="M5 5H25L15 25Z" fill="none" stroke="#1fb58f" stroke-width="2"/><rect x="1" y="1" width="7" height="7" fill="#1d1d1d" stroke="#1fb58f" stroke-width="2"/><rect x="22" y="1" width="7" height="7" fill="#1d1d1d" stroke="#1fb58f" stroke-width="2"/><rect x="11.5" y="21" width="7" height="7" fill="#1d1d1d" stroke="#1fb58f" stroke-width="2"/></svg>
<svg style="left:2518px;top:1473.0px" width="30" height="30" viewBox="0 0 30 30"><circle cx="15" cy="15" r="13" fill="#b4505a"/><path d="M15 15V28A13 13 0 0 1 2 15Z" fill="#1f1f1f"/><circle cx="15" cy="15" r="12.5" fill="none" stroke="#b4505a" stroke-width="1.2"/><path d="M2 15H28" stroke="#1f1f1f" stroke-width="1"/></svg>
<svg style="left:2518px;top:1546.5px" width="30" height="30" viewBox="0 0 30 30"><rect x="2.5" y="2.5" width="25" height="25" fill="#1f1f1f" stroke="#b4505a" stroke-width="1.5"/><path d="M2 2H8.5V8.5H2ZM15 2H21.5V8.5H15ZM8.5 8.5H15V15H8.5ZM21.5 8.5H28V15H21.5ZM2 15H8.5V21.5H2ZM15 15H21.5V21.5H15ZM8.5 21.5H15V28H8.5ZM21.5 21.5H28V28H21.5Z" fill="#b4505a"/></svg>
<svg style="left:2580px;top:692px" width="30" height="30" viewBox="0 0 30 30"><path d="M2 8V2H8M22 2H28V8M28 22V28H22M8 28H2V22" fill="none" stroke="#bdbdbd" stroke-width="2"/><rect x="7" y="7" width="16" height="16" fill="#e8e8e8"/></svg>
<div class="a t" style="left:2628px;top:689.5px;height:33px;line-height:33px;font-size:24px;color:#e6e6e6;text-shadow:0 1px 1px #000;"><span class="c">平面</span></div>
<svg style="left:2972px;top:692px" width="30" height="30" viewBox="0 0 30 30"><path d="M2 28L11 19" stroke="#8a8a8a" stroke-width="2"/><path d="M10 13L17 6L18 2L28 12L24 13L17 20L16 25L5 14Z" fill="none" stroke="#8a8a8a" stroke-width="2" stroke-linejoin="round"/></svg>
<div class="a" style="left:3012px;top:690px;width:6px;height:870px;background:#3a3a3a;border-radius:3px;"></div>
<div class="a" style="left:2576px;top:759px;width:431px;height:38px;background:#1d1d1d;border-radius:9px;border:2px solid #3a3a3a;"></div>
<div class="a" style="left:2577px;top:760px;width:61px;height:36px;background:#2a2a2a;border-radius:8px 0 0 8px;border-right:1px solid #3a3a3a;"></div>
<svg style="left:2584px;top:763px" width="30" height="30" viewBox="0 0 30 30"><path d="M2 8V2H8M22 2H28V8M28 22V28H22M8 28H2V22" fill="none" stroke="#bdbdbd" stroke-width="2"/><rect x="7" y="7" width="16" height="16" fill="#e8e8e8"/></svg>
<svg style="left:2618px;top:775px" width="14" height="10"><path d="M1 1.5L7.0 7.1L13 1.5" fill="none" stroke="#d8d8d8" stroke-width="2.3"/></svg>
<div class="a t" style="left:2654px;top:761.5px;height:33px;line-height:33px;font-size:24px;color:#e6e6e6;"><span class="c">平面</span></div>
<div class="a" style="left:2575px;top:818px;width:433px;height:562px;background:#3d3d3d;border-radius:10px;"></div>
<svg style="left:2591px;top:838px" width="20" height="14"><path d="M1 2L9 10L17 2" fill="none" stroke="#c8c8c8" stroke-width="2"/></svg>
<div class="a t" style="left:2620px;top:828.5px;height:33px;line-height:33px;font-size:24px;color:#e6e6e6;text-shadow:0 1px 1px #000;"><span class="c">变换</span></div>
<svg style="left:2973px;top:839px" width="24" height="12"><rect x="0" y="0" width="3" height="3" fill="#999"/><rect x="0" y="2" width="3" height="2" fill="#111"/><rect x="0" y="6" width="3" height="3" fill="#999"/><rect x="0" y="8" width="3" height="2" fill="#111"/><rect x="6" y="0" width="3" height="3" fill="#999"/><rect x="6" y="2" width="3" height="2" fill="#111"/><rect x="6" y="6" width="3" height="3" fill="#999"/><rect x="6" y="8" width="3" height="2" fill="#111"/><rect x="12" y="0" width="3" height="3" fill="#999"/><rect x="12" y="2" width="3" height="2" fill="#111"/><rect x="12" y="6" width="3" height="3" fill="#999"/><rect x="12" y="8" width="3" height="2" fill="#111"/><rect x="18" y="0" width="3" height="3" fill="#999"/><rect x="18" y="2" width="3" height="2" fill="#111"/><rect x="18" y="6" width="3" height="3" fill="#999"/><rect x="18" y="8" width="3" height="2" fill="#111"/></svg>
<div class="a" style="left:2747px;top:886px;width:163px;height:36px;background:#545454;border-radius:8px 8px 0 0;"></div>
<div class="a t" style="left:2428.5px;width:800px;text-align:center;top:888.0px;height:32px;line-height:32px;font-size:23px;color:#e6e6e6;text-shadow:0 1px 1px #000;">0 m</div>
<div class="a t" style="right:297px;text-align:right;top:887.5px;height:33px;line-height:33px;font-size:24px;color:#e0e0e0;text-shadow:0 1px 1px #000;"><span class="c">位置</span> X</div>
<svg style="left:2916px;top:891px" width="30" height="26" viewBox="0 0 30 26"><path d="M2 10A6 6 0 0 1 14 10V13" fill="none" stroke="#a0a0a0" stroke-width="2"/><rect x="10" y="13" width="17" height="11" fill="none" stroke="#a0a0a0" stroke-width="2"/><rect x="17.5" y="17" width="2" height="4" fill="#a0a0a0"/></svg>
<div class="a" style="left:2967.5px;top:899.5px;width:9px;height:9px;border-radius:50%;background:#e0e0e0;"></div>
<div class="a" style="left:2747px;top:925px;width:163px;height:36px;background:#545454;border-radius:0;"></div>
<div class="a t" style="left:2428.5px;width:800px;text-align:center;top:927.0px;height:32px;line-height:32px;font-size:23px;color:#e6e6e6;text-shadow:0 1px 1px #000;">0 m</div>
<div class="a t" style="right:297px;text-align:right;top:926.5px;height:33px;line-height:33px;font-size:24px;color:#e0e0e0;text-shadow:0 1px 1px #000;">Y</div>
<svg style="left:2916px;top:930px" width="30" height="26" viewBox="0 0 30 26"><path d="M2 10A6 6 0 0 1 14 10V13" fill="none" stroke="#a0a0a0" stroke-width="2"/><rect x="10" y="13" width="17" height="11" fill="none" stroke="#a0a0a0" stroke-width="2"/><rect x="17.5" y="17" width="2" height="4" fill="#a0a0a0"/></svg>
<div class="a" style="left:2967.5px;top:938.5px;width:9px;height:9px;border-radius:50%;background:#e0e0e0;"></div>
<div class="a" style="left:2747px;top:964px;width:163px;height:36px;background:#545454;border-radius:0 0 8px 8px;box-shadow:0 2px 1px rgba(0,0,0,0.25);"></div>
<div class="a t" style="left:2428.5px;width:800px;text-align:center;top:966.0px;height:32px;line-height:32px;font-size:23px;color:#e6e6e6;text-shadow:0 1px 1px #000;">0 m</div>
<div class="a t" style="right:297px;text-align:right;top:965.5px;height:33px;line-height:33px;font-size:24px;color:#e0e0e0;text-shadow:0 1px 1px #000;">Z</div>
<svg style="left:2916px;top:969px" width="30" height="26" viewBox="0 0 30 26"><path d="M2 10A6 6 0 0 1 14 10V13" fill="none" stroke="#a0a0a0" stroke-width="2"/><rect x="10" y="13" width="17" height="11" fill="none" stroke="#a0a0a0" stroke-width="2"/><rect x="17.5" y="17" width="2" height="4" fill="#a0a0a0"/></svg>
<div class="a" style="left:2967.5px;top:977.5px;width:9px;height:9px;border-radius:50%;background:#e0e0e0;"></div>
<div class="a" style="left:2747px;top:1016px;width:163px;height:36px;background:#545454;border-radius:8px 8px 0 0;"></div>
<div class="a t" style="left:2428.5px;width:800px;text-align:center;top:1018.0px;height:32px;line-height:32px;font-size:23px;color:#e6e6e6;text-shadow:0 1px 1px #000;">0°</div>
<div class="a t" style="right:297px;text-align:right;top:1017.5px;height:33px;line-height:33px;font-size:24px;color:#e0e0e0;text-shadow:0 1px 1px #000;"><span class="c">旋转</span> X</div>
<svg style="left:2916px;top:1021px" width="30" height="26" viewBox="0 0 30 26"><path d="M2 10A6 6 0 0 1 14 10V13" fill="none" stroke="#a0a0a0" stroke-width="2"/><rect x="10" y="13" width="17" height="11" fill="none" stroke="#a0a0a0" stroke-width="2"/><rect x="17.5" y="17" width="2" height="4" fill="#a0a0a0"/></svg>
<div class="a" style="left:2967.5px;top:1029.5px;width:9px;height:9px;border-radius:50%;background:#e0e0e0;"></div>
<div class="a" style="left:2747px;top:1055px;width:163px;height:36px;background:#545454;border-radius:0;"></div>
<div class="a t" style="left:2428.5px;width:800px;text-align:center;top:1057.0px;height:32px;line-height:32px;font-size:23px;color:#e6e6e6;text-shadow:0 1px 1px #000;">0°</div>
<div class="a t" style="right:297px;text-align:right;top:1056.5px;height:33px;line-height:33px;font-size:24px;color:#e0e0e0;text-shadow:0 1px 1px #000;">Y</div>
<svg style="left:2916px;top:1060px" width="30" height="26" viewBox="0 0 30 26"><path d="M2 10A6 6 0 0 1 14 10V13" fill="none" stroke="#a0a0a0" stroke-width="2"/><rect x="10" y="13" width="17" height="11" fill="none" stroke="#a0a0a0" stroke-width="2"/><rect x="17.5" y="17" width="2" height="4" fill="#a0a0a0"/></svg>
<div class="a" style="left:2967.5px;top:1068.5px;width:9px;height:9px;border-radius:50%;background:#e0e0e0;"></div>
<div class="a" style="left:2747px;top:1094px;width:163px;height:36px;background:#545454;border-radius:0 0 8px 8px;box-shadow:0 2px 1px rgba(0,0,0,0.25);"></div>
<div class="a t" style="left:2428.5px;width:800px;text-align:center;top:1096.0px;height:32px;line-height:32px;font-size:23px;color:#e6e6e6;text-shadow:0 1px 1px #000;">0°</div>
<div class="a t" style="right:297px;text-align:right;top:1095.5px;height:33px;line-height:33px;font-size:24px;color:#e0e0e0;text-shadow:0 1px 1px #000;">Z</div>
<svg style="left:2916px;top:1099px" width="30" height="26" viewBox="0 0 30 26"><path d="M2 10A6 6 0 0 1 14 10V13" fill="none" stroke="#a0a0a0" stroke-width="2"/><rect x="10" y="13" width="17" height="11" fill="none" stroke="#a0a0a0" stroke-width="2"/><rect x="17.5" y="17" width="2" height="4" fill="#a0a0a0"/></svg>
<div class="a" style="left:2967.5px;top:1107.5px;width:9px;height:9px;border-radius:50%;background:#e0e0e0;"></div>
<div class="a" style="left:2747px;top:1146px;width:163px;height:36px;background:#282828;border-radius:8px;box-shadow:0 2px 1px rgba(0,0,0,0.25);"></div>
<div class="a t" style="left:2762px;top:1148.0px;height:32px;line-height:32px;font-size:23px;color:#e6e6e6;">XYZ <span class="c">欧拉</span></div>
<svg style="left:2891px;top:1161px" width="14" height="10"><path d="M1 1.5L7.0 7.1L13 1.5" fill="none" stroke="#d8d8d8" stroke-width="2.3"/></svg>
<div class="a t" style="right:297px;text-align:right;top:1147.5px;height:33px;line-height:33px;font-size:24px;color:#e0e0e0;text-shadow:0 1px 1px #000;"><span class="c">模式</span></div>
<div class="a" style="left:2967.5px;top:1159.5px;width:9px;height:9px;border-radius:50%;background:#e0e0e0;"></div>
<div class="a" style="left:2747px;top:1196px;width:163px;height:36px;background:#545454;border-radius:8px 8px 0 0;"></div>
<div class="a t" style="left:2428.5px;width:800px;text-align:center;top:1198.0px;height:32px;line-height:32px;font-size:23px;color:#e6e6e6;text-shadow:0 1px 1px #000;">1.000</div>
<div class="a t" style="right:297px;text-align:right;top:1197.5px;height:33px;line-height:33px;font-size:24px;color:#e0e0e0;text-shadow:0 1px 1px #000;"><span class="c">缩放</span> X</div>
<svg style="left:2916px;top:1201px" width="30" height="26" viewBox="0 0 30 26"><path d="M2 10A6 6 0 0 1 14 10V13" fill="none" stroke="#a0a0a0" stroke-width="2"/><rect x="10" y="13" width="17" height="11" fill="none" stroke="#a0a0a0" stroke-width="2"/><rect x="17.5" y="17" width="2" height="4" fill="#a0a0a0"/></svg>
<div class="a" style="left:2967.5px;top:1209.5px;width:9px;height:9px;border-radius:50%;background:#e0e0e0;"></div>
<div class="a" style="left:2747px;top:1235px;width:163px;height:36px;background:#545454;border-radius:0;"></div>
<div class="a t" style="left:2428.5px;width:800px;text-align:center;top:1237.0px;height:32px;line-height:32px;font-size:23px;color:#e6e6e6;text-shadow:0 1px 1px #000;">2.642</div>
<div class="a t" style="right:297px;text-align:right;top:1236.5px;height:33px;line-height:33px;font-size:24px;color:#e0e0e0;text-shadow:0 1px 1px #000;">Y</div>
<svg style="left:2916px;top:1240px" width="30" height="26" viewBox="0 0 30 26"><path d="M2 10A6 6 0 0 1 14 10V13" fill="none" stroke="#a0a0a0" stroke-width="2"/><rect x="10" y="13" width="17" height="11" fill="none" stroke="#a0a0a0" stroke-width="2"/><rect x="17.5" y="17" width="2" height="4" fill="#a0a0a0"/></svg>
<div class="a" style="left:2967.5px;top:1248.5px;width:9px;height:9px;border-radius:50%;background:#e0e0e0;"></div>
<div class="a" style="left:2747px;top:1274px;width:163px;height:36px;background:#545454;border-radius:0 0 8px 8px;box-shadow:0 2px 1px rgba(0,0,0,0.25);"></div>
<div class="a t" style="left:2428.5px;width:800px;text-align:center;top:1276.0px;height:32px;line-height:32px;font-size:23px;color:#e6e6e6;text-shadow:0 1px 1px #000;">1.000</div>
<div class="a t" style="right:297px;text-align:right;top:1275.5px;height:33px;line-height:33px;font-size:24px;color:#e0e0e0;text-shadow:0 1px 1px #000;">Z</div>
<svg style="left:2916px;top:1279px" width="30" height="26" viewBox="0 0 30 26"><path d="M2 10A6 6 0 0 1 14 10V13" fill="none" stroke="#a0a0a0" stroke-width="2"/><rect x="10" y="13" width="17" height="11" fill="none" stroke="#a0a0a0" stroke-width="2"/><rect x="17.5" y="17" width="2" height="4" fill="#a0a0a0"/></svg>
<div class="a" style="left:2967.5px;top:1287.5px;width:9px;height:9px;border-radius:50%;background:#e0e0e0;"></div>
<svg style="left:2624px;top:1348px" width="14" height="20"><path d="M2 2L10 10L2 18" fill="none" stroke="#c0c0c0" stroke-width="2"/></svg>
<div class="a t" style="left:2648px;top:1340.5px;height:33px;line-height:33px;font-size:24px;color:#e0e0e0;text-shadow:0 1px 1px #000;"><span class="c">变换增量</span></div>
<div class="a" style="left:2575px;top:1384px;width:433px;height:50px;background:#3d3d3d;border-radius:10px;"></div>
<svg style="left:2596px;top:1399px" width="14" height="20"><path d="M2 2L10 10L2 18" fill="none" stroke="#c0c0c0" stroke-width="2"/></svg>
<div class="a t" style="left:2619px;top:1392.5px;height:33px;line-height:33px;font-size:24px;color:#e6e6e6;text-shadow:0 1px 1px #000;"><span class="c">关系</span></div>
<svg style="left:2973px;top:1403px" width="24" height="12"><rect x="0" y="0" width="3" height="3" fill="#999"/><rect x="0" y="2" width="3" height="2" fill="#111"/><rect x="0" y="6" width="3" height="3" fill="#999"/><rect x="0" y="8" width="3" height="2" fill="#111"/><rect x="6" y="0" width="3" height="3" fill="#999"/><rect x="6" y="2" width="3" height="2" fill="#111"/><rect x="6" y="6" width="3" height="3" fill="#999"/><rect x="6" y="8" width="3" height="2" fill="#111"/><rect x="12" y="0" width="3" height="3" fill="#999"/><rect x="12" y="2" width="3" height="2" fill="#111"/><rect x="12" y="6" width="3" height="3" fill="#999"/><rect x="12" y="8" width="3" height="2" fill="#111"/><rect x="18" y="0" width="3" height="3" fill="#999"/><rect x="18" y="2" width="3" height="2" fill="#111"/><rect x="18" y="6" width="3" height="3" fill="#999"/><rect x="18" y="8" width="3" height="2" fill="#111"/></svg>
<div class="a" style="left:2575px;top:1438px;width:433px;height:50px;background:#3d3d3d;border-radius:10px;"></div>
<svg style="left:2596px;top:1453px" width="14" height="20"><path d="M2 2L10 10L2 18" fill="none" stroke="#c0c0c0" stroke-width="2"/></svg>
<div class="a t" style="left:2619px;top:1446.5px;height:33px;line-height:33px;font-size:24px;color:#e6e6e6;text-shadow:0 1px 1px #000;"><span class="c">集合</span></div>
<svg style="left:2973px;top:1457px" width="24" height="12"><rect x="0" y="0" width="3" height="3" fill="#999"/><rect x="0" y="2" width="3" height="2" fill="#111"/><rect x="0" y="6" width="3" height="3" fill="#999"/><rect x="0" y="8" width="3" height="2" fill="#111"/><rect x="6" y="0" width="3" height="3" fill="#999"/><rect x="6" y="2" width="3" height="2" fill="#111"/><rect x="6" y="6" width="3" height="3" fill="#999"/><rect x="6" y="8" width="3" height="2" fill="#111"/><rect x="12" y="0" width="3" height="3" fill="#999"/><rect x="12" y="2" width="3" height="2" fill="#111"/><rect x="12" y="6" width="3" height="3" fill="#999"/><rect x="12" y="8" width="3" height="2" fill="#111"/><rect x="18" y="0" width="3" height="3" fill="#999"/><rect x="18" y="2" width="3" height="2" fill="#111"/><rect x="18" y="6" width="3" height="3" fill="#999"/><rect x="18" y="8" width="3" height="2" fill="#111"/></svg>
<div class="a" style="left:2575px;top:1492px;width:433px;height:50px;background:#3d3d3d;border-radius:10px;"></div>
<svg style="left:2596px;top:1507px" width="14" height="20"><path d="M2 2L10 10L2 18" fill="none" stroke="#c0c0c0" stroke-width="2"/></svg>
<div class="a t" style="left:2619px;top:1500.5px;height:33px;line-height:33px;font-size:24px;color:#e6e6e6;text-shadow:0 1px 1px #000;"><span class="c">实例化</span></div>
<svg style="left:2973px;top:1511px" width="24" height="12"><rect x="0" y="0" width="3" height="3" fill="#999"/><rect x="0" y="2" width="3" height="2" fill="#111"/><rect x="0" y="6" width="3" height="3" fill="#999"/><rect x="0" y="8" width="3" height="2" fill="#111"/><rect x="6" y="0" width="3" height="3" fill="#999"/><rect x="6" y="2" width="3" height="2" fill="#111"/><rect x="6" y="6" width="3" height="3" fill="#999"/><rect x="6" y="8" width="3" height="2" fill="#111"/><rect x="12" y="0" width="3" height="3" fill="#999"/><rect x="12" y="2" width="3" height="2" fill="#111"/><rect x="12" y="6" width="3" height="3" fill="#999"/><rect x="12" y="8" width="3" height="2" fill="#111"/><rect x="18" y="0" width="3" height="3" fill="#999"/><rect x="18" y="2" width="3" height="2" fill="#111"/><rect x="18" y="6" width="3" height="3" fill="#999"/><rect x="18" y="8" width="3" height="2" fill="#111"/></svg>
<div class="a" style="left:2575px;top:1546px;width:433px;height:50px;background:#3d3d3d;border-radius:10px;"></div>
<svg style="left:2596px;top:1561px" width="14" height="20"><path d="M2 2L10 10L2 18" fill="none" stroke="#c0c0c0" stroke-width="2"/></svg>
<div class="a t" style="left:2619px;top:1554.5px;height:33px;line-height:33px;font-size:24px;color:#e6e6e6;text-shadow:0 1px 1px #000;"><span class="c">运动路径</span></div>
<svg style="left:2973px;top:1565px" width="24" height="12"><rect x="0" y="0" width="3" height="3" fill="#999"/><rect x="0" y="2" width="3" height="2" fill="#111"/><rect x="0" y="6" width="3" height="3" fill="#999"/><rect x="0" y="8" width="3" height="2" fill="#111"/><rect x="6" y="0" width="3" height="3" fill="#999"/><rect x="6" y="2" width="3" height="2" fill="#111"/><rect x="6" y="6" width="3" height="3" fill="#999"/><rect x="6" y="8" width="3" height="2" fill="#111"/><rect x="12" y="0" width="3" height="3" fill="#999"/><rect x="12" y="2" width="3" height="2" fill="#111"/><rect x="12" y="6" width="3" height="3" fill="#999"/><rect x="12" y="8" width="3" height="2" fill="#111"/><rect x="18" y="0" width="3" height="3" fill="#999"/><rect x="18" y="2" width="3" height="2" fill="#111"/><rect x="18" y="6" width="3" height="3" fill="#999"/><rect x="18" y="8" width="3" height="2" fill="#111"/></svg>
<div class="a" style="left:2575px;top:1600px;width:433px;height:50px;background:#3d3d3d;border-radius:10px;"></div>
<svg style="left:2596px;top:1615px" width="14" height="20"><path d="M2 2L10 10L2 18" fill="none" stroke="#c0c0c0" stroke-width="2"/></svg>
<div class="a t" style="left:2619px;top:1608.5px;height:33px;line-height:33px;font-size:24px;color:#e6e6e6;text-shadow:0 1px 1px #000;"><span class="c">可见性</span></div>
<svg style="left:2973px;top:1619px" width="24" height="12"><rect x="0" y="0" width="3" height="3" fill="#999"/><rect x="0" y="2" width="3" height="2" fill="#111"/><rect x="0" y="6" width="3" height="3" fill="#999"/><rect x="0" y="8" width="3" height="2" fill="#111"/><rect x="6" y="0" width="3" height="3" fill="#999"/><rect x="6" y="2" width="3" height="2" fill="#111"/><rect x="6" y="6" width="3" height="3" fill="#999"/><rect x="6" y="8" width="3" height="2" fill="#111"/><rect x="12" y="0" width="3" height="3" fill="#999"/><rect x="12" y="2" width="3" height="2" fill="#111"/><rect x="12" y="6" width="3" height="3" fill="#999"/><rect x="12" y="8" width="3" height="2" fill="#111"/><rect x="18" y="0" width="3" height="3" fill="#999"/><rect x="18" y="2" width="3" height="2" fill="#111"/><rect x="18" y="6" width="3" height="3" fill="#999"/><rect x="18" y="8" width="3" height="2" fill="#111"/></svg>
<div class="a" style="left:2575px;top:1654px;width:433px;height:50px;background:#3d3d3d;border-radius:10px;"></div>
<svg style="left:2596px;top:1669px" width="14" height="20"><path d="M2 2L10 10L2 18" fill="none" stroke="#c0c0c0" stroke-width="2"/></svg>
<div class="a t" style="left:2619px;top:1662.5px;height:33px;line-height:33px;font-size:24px;color:#e6e6e6;text-shadow:0 1px 1px #000;"><span class="c">视图显示</span></div>
<svg style="left:2973px;top:1673px" width="24" height="12"><rect x="0" y="0" width="3" height="3" fill="#999"/><rect x="0" y="2" width="3" height="2" fill="#111"/><rect x="0" y="6" width="3" height="3" fill="#999"/><rect x="0" y="8" width="3" height="2" fill="#111"/><rect x="6" y="0" width="3" height="3" fill="#999"/><rect x="6" y="2" width="3" height="2" fill="#111"/><rect x="6" y="6" width="3" height="3" fill="#999"/><rect x="6" y="8" width="3" height="2" fill="#111"/><rect x="12" y="0" width="3" height="3" fill="#999"/><rect x="12" y="2" width="3" height="2" fill="#111"/><rect x="12" y="6" width="3" height="3" fill="#999"/><rect x="12" y="8" width="3" height="2" fill="#111"/><rect x="18" y="0" width="3" height="3" fill="#999"/><rect x="18" y="2" width="3" height="2" fill="#111"/><rect x="18" y="6" width="3" height="3" fill="#999"/><rect x="18" y="8" width="3" height="2" fill="#111"/></svg>
<div class="a" style="left:2px;top:1572px;width:2493px;height:116px;background:#1d1d1d;border-radius:12px 12px 0 0;overflow:hidden;"></div>
<div class="a" style="left:2px;top:1572px;width:2493px;height:49px;background:#2b2b2b;border-radius:12px 12px 0 0;"></div>
<div class="a" style="left:17px;top:1578px;width:62px;height:39px;background:#282828;border-radius:9px;border:2px solid #3a3a3a;"></div>
<svg style="left:25px;top:1583px" width="30" height="30" viewBox="0 0 30 30"><circle cx="15" cy="15" r="14" fill="#e6e6e6"/><path d="M17 7L10 15L17 23" fill="none" stroke="#282828" stroke-width="3.5" stroke-linecap="round"/></svg>
<svg style="left:59px;top:1593px" width="15" height="10"><path d="M1 1.5L7.5 7.7L14 1.5" fill="none" stroke="#d8d8d8" stroke-width="2.3"/></svg>
<div class="a" style="left:91px;top:1578px;width:186px;height:39px;background:#282828;border-radius:9px;border:2px solid #3a3a3a;"></div>
<div class="a" style="left:182px;top:1579px;width:1px;height:37px;background:#3a3a3a;"></div>
<div class="a t" style="left:106px;top:1580.5px;height:33px;line-height:33px;font-size:24px;color:#e6e6e6;"><span class="c">回放</span></div>
<svg style="left:163px;top:1594px" width="15" height="10"><path d="M1 1.5L7.5 7.7L14 1.5" fill="none" stroke="#d8d8d8" stroke-width="2.3"/></svg>
<div class="a t" style="left:198px;top:1580.5px;height:33px;line-height:33px;font-size:24px;color:#e6e6e6;"><span class="c">插帧</span></div>
<svg style="left:257px;top:1594px" width="15" height="10"><path d="M1 1.5L7.5 7.7L14 1.5" fill="none" stroke="#d8d8d8" stroke-width="2.3"/></svg>
<div class="a t" style="left:297px;top:1580.5px;height:33px;line-height:33px;font-size:24px;color:#e6e6e6;"><span class="c">视图</span></div>
<div class="a t" style="left:371px;top:1580.5px;height:33px;line-height:33px;font-size:24px;color:#e6e6e6;"><span class="c">标记</span></div>
<div class="a" style="left:1063px;top:1579px;width:77px;height:37px;background:#282828;border-radius:9px;border:2px solid #3a3a3a;"></div>
<div class="a" style="left:1064px;top:1580px;width:37px;height:35px;background:#545454;border-radius:8px 0 0 8px;"></div>
<svg style="left:1070px;top:1586px" width="24" height="24"><circle cx="12" cy="12" r="9.5" fill="none" stroke="#c8c8c8" stroke-width="2"/></svg>
<svg style="left:1112px;top:1594px" width="14" height="10"><path d="M1 1.5L7.0 7.1L13 1.5" fill="none" stroke="#6a6a6a" stroke-width="2.3"/></svg>
<div class="a" style="left:1152px;top:1579px;width:238px;height:37px;background:#545454;border-radius:9px;box-shadow:0 2px 1px rgba(0,0,0,0.25);"></div>
<div class="a" style="left:1191.6px;top:1579px;width:1.5px;height:37px;background:#444444;"></div>
<div class="a" style="left:1231.2px;top:1579px;width:1.5px;height:37px;background:#444444;"></div>
<div class="a" style="left:1270.8px;top:1579px;width:1.5px;height:37px;background:#444444;"></div>
<div class="a" style="left:1310.4px;top:1579px;width:1.5px;height:37px;background:#444444;"></div>
<div class="a" style="left:1350.0px;top:1579px;width:1.5px;height:37px;background:#444444;"></div>
<svg style="left:1157.0px;top:1583px" width="30" height="30" viewBox="0 0 30 30"><rect x="3" y="5" width="3.5" height="20" fill="#e6e6e6"/><path d="M24 6V24L9 15Z" fill="#e6e6e6"/></svg>
<svg style="left:1196.6px;top:1583px" width="30" height="30" viewBox="0 0 30 30"><path d="M2 15L9 7L16 15L9 23Z" fill="#e6e6e6"/><path d="M29 7V23L18 15Z" fill="#e6e6e6"/></svg>
<svg style="left:1236.2px;top:1583px" width="30" height="30" viewBox="0 0 30 30"><path d="M23 4V26L6 15Z" fill="#e6e6e6" stroke="#e6e6e6" stroke-width="1.5" stroke-linejoin="round"/></svg>
<svg style="left:1275.8px;top:1583px" width="30" height="30" viewBox="0 0 30 30"><path d="M8 4V26L25 15Z" fill="#e6e6e6" stroke="#e6e6e6" stroke-width="1.5" stroke-linejoin="round"/></svg>
<svg style="left:1315.4px;top:1583px" width="30" height="30" viewBox="0 0 30 30"><path d="M2 7V23L13 15Z" fill="#e6e6e6"/><path d="M15 15L22 7L29 15L22 23Z" fill="#e6e6e6"/></svg>
<svg style="left:1355.0px;top:1583px" width="30" height="30" viewBox="0 0 30 30"><path d="M6 6V24L21 15Z" fill="#e6e6e6"/><rect x="23.5" y="5" width="3.5" height="20" fill="#e6e6e6"/></svg>
<div class="a" style="left:1934px;top:1579px;width:146px;height:37px;background:#545454;border-radius:9px;box-shadow:0 2px 1px rgba(0,0,0,0.25);"></div>
<div class="a t" style="left:1607px;width:800px;text-align:center;top:1581.5px;height:32px;line-height:32px;font-size:23px;color:#e6e6e6;">1</div>
<div class="a" style="left:2094px;top:1579px;width:385px;height:37px;background:#545454;border-radius:9px;box-shadow:0 2px 1px rgba(0,0,0,0.25);"></div>
<div class="a" style="left:2095px;top:1580px;width:36px;height:35px;background:#4a4a4a;border-radius:8px 0 0 8px;border-right:1px solid #3c3c3c;"></div>
<svg style="left:2098px;top:1581px" width="30" height="32" viewBox="0 0 30 32"><circle cx="14" cy="18" r="11" fill="none" stroke="#e6e6e6" stroke-width="2.2"/><path d="M9 3H19M14 3V7M14 12V19H19M24 8L27 5" fill="none" stroke="#e6e6e6" stroke-width="2.2"/></svg>
<div class="a" style="left:2305px;top:1580px;width:1.5px;height:35px;background:#444444;"></div>
<div class="a t" style="left:2163px;top:1581.0px;height:33px;line-height:33px;font-size:24px;color:#e6e6e6;"><span class="c">起始</span></div>
<div class="a t" style="right:742px;text-align:right;top:1581.5px;height:32px;line-height:32px;font-size:23px;color:#e6e6e6;">1</div>
<div class="a t" style="left:2337px;top:1581.0px;height:33px;line-height:33px;font-size:24px;color:#e6e6e6;"><span class="c">结束</span></div>
<div class="a t" style="right:572px;text-align:right;top:1581.5px;height:32px;line-height:32px;font-size:23px;color:#e6e6e6;">250</div>
<div class="a t" style="left:-223.325px;width:800px;text-align:center;top:1629.0px;height:32px;line-height:32px;font-size:23px;color:#bdbdbd;">10</div>
<div class="a t" style="left:-130.575px;width:800px;text-align:center;top:1629.0px;height:32px;line-height:32px;font-size:23px;color:#bdbdbd;">20</div>
<div class="a t" style="left:-37.82499999999999px;width:800px;text-align:center;top:1629.0px;height:32px;line-height:32px;font-size:23px;color:#bdbdbd;">30</div>
<div class="a t" style="left:54.92500000000001px;width:800px;text-align:center;top:1629.0px;height:32px;line-height:32px;font-size:23px;color:#bdbdbd;">40</div>
<div class="a t" style="left:147.67500000000007px;width:800px;text-align:center;top:1629.0px;height:32px;line-height:32px;font-size:23px;color:#bdbdbd;">50</div>
<div class="a t" style="left:240.42500000000007px;width:800px;text-align:center;top:1629.0px;height:32px;line-height:32px;font-size:23px;color:#bdbdbd;">60</div>
<div class="a t" style="left:333.17500000000007px;width:800px;text-align:center;top:1629.0px;height:32px;line-height:32px;font-size:23px;color:#bdbdbd;">70</div>
<div class="a t" style="left:425.92500000000007px;width:800px;text-align:center;top:1629.0px;height:32px;line-height:32px;font-size:23px;color:#bdbdbd;">80</div>
<div class="a t" style="left:518.6750000000001px;width:800px;text-align:center;top:1629.0px;height:32px;line-height:32px;font-size:23px;color:#bdbdbd;">90</div>
<div class="a t" style="left:611.4250000000001px;width:800px;text-align:center;top:1629.0px;height:32px;line-height:32px;font-size:23px;color:#bdbdbd;">100</div>
<div class="a t" style="left:704.175px;width:800px;text-align:center;top:1629.0px;height:32px;line-height:32px;font-size:23px;color:#bdbdbd;">110</div>
<div class="a t" style="left:796.9250000000002px;width:800px;text-align:center;top:1629.0px;height:32px;line-height:32px;font-size:23px;color:#bdbdbd;">120</div>
<div class="a t" style="left:889.6750000000002px;width:800px;text-align:center;top:1629.0px;height:32px;line-height:32px;font-size:23px;color:#bdbdbd;">130</div>
<div class="a t" style="left:982.4250000000002px;width:800px;text-align:center;top:1629.0px;height:32px;line-height:32px;font-size:23px;color:#bdbdbd;">140</div>
<div class="a t" style="left:1075.1750000000002px;width:800px;text-align:center;top:1629.0px;height:32px;line-height:32px;font-size:23px;color:#bdbdbd;">150</div>
<div class="a t" style="left:1167.9250000000002px;width:800px;text-align:center;top:1629.0px;height:32px;line-height:32px;font-size:23px;color:#bdbdbd;">160</div>
<div class="a t" style="left:1260.6750000000002px;width:800px;text-align:center;top:1629.0px;height:32px;line-height:32px;font-size:23px;color:#bdbdbd;">170</div>
<div class="a t" style="left:1353.4250000000002px;width:800px;text-align:center;top:1629.0px;height:32px;line-height:32px;font-size:23px;color:#bdbdbd;">180</div>
<div class="a t" style="left:1446.1750000000002px;width:800px;text-align:center;top:1629.0px;height:32px;line-height:32px;font-size:23px;color:#bdbdbd;">190</div>
<div class="a t" style="left:1538.9250000000002px;width:800px;text-align:center;top:1629.0px;height:32px;line-height:32px;font-size:23px;color:#bdbdbd;">200</div>
<div class="a t" style="left:1631.6750000000002px;width:800px;text-align:center;top:1629.0px;height:32px;line-height:32px;font-size:23px;color:#bdbdbd;">210</div>
<div class="a t" style="left:1724.4250000000002px;width:800px;text-align:center;top:1629.0px;height:32px;line-height:32px;font-size:23px;color:#bdbdbd;">220</div>
<div class="a t" style="left:1817.1749999999997px;width:800px;text-align:center;top:1629.0px;height:32px;line-height:32px;font-size:23px;color:#bdbdbd;">230</div>
<div class="a t" style="left:1909.9249999999997px;width:800px;text-align:center;top:1629.0px;height:32px;line-height:32px;font-size:23px;color:#bdbdbd;">240</div>
<div class="a t" style="left:2002.6749999999997px;width:800px;text-align:center;top:1629.0px;height:32px;line-height:32px;font-size:23px;color:#bdbdbd;">250</div>
<div class="a" style="left:69px;top:1628px;width:48px;height:33px;background:#4772b3;border-radius:8px;"></div>
<div class="a t" style="left:-307px;width:800px;text-align:center;top:1629.0px;height:32px;line-height:32px;font-size:23px;color:#f0f0f0;">1</div>
<div class="a" style="left:92px;top:1661px;width:3px;height:27px;background:#4772b3;"></div>
<div class="a" style="left:18px;top:1667px;width:2460px;height:16px;background:#595959;border-radius:8px;"></div>
<div class="a" style="left:21px;top:1669px;width:12px;height:12px;border-radius:50%;background:#2b2b2b;"></div>
<div class="a" style="left:2461px;top:1669px;width:12px;height:12px;border-radius:50%;background:#2b2b2b;"></div>
<div class="a" style="left:2px;top:1683px;width:2493px;height:5px;background:#2e2e2e;"></div>
<svg style="left:0;top:1683px" width="2500" height="5"><rect x="129.3" y="0" width="2" height="5" fill="#1a1a1a"/><rect x="175.7" y="0" width="2" height="5" fill="#1a1a1a"/><rect x="222.1" y="0" width="2" height="5" fill="#1a1a1a"/><rect x="268.4" y="0" width="2" height="5" fill="#1a1a1a"/><rect x="314.8" y="0" width="2" height="5" fill="#1a1a1a"/><rect x="361.2" y="0" width="2" height="5" fill="#1a1a1a"/><rect x="407.6" y="0" width="2" height="5" fill="#1a1a1a"/><rect x="453.9" y="0" width="2" height="5" fill="#1a1a1a"/><rect x="500.3" y="0" width="2" height="5" fill="#1a1a1a"/><rect x="546.7" y="0" width="2" height="5" fill="#1a1a1a"/><rect x="593.1" y="0" width="2" height="5" fill="#1a1a1a"/><rect x="639.4" y="0" width="2" height="5" fill="#1a1a1a"/><rect x="685.8" y="0" width="2" height="5" fill="#1a1a1a"/><rect x="732.2" y="0" width="2" height="5" fill="#1a1a1a"/><rect x="778.6" y="0" width="2" height="5" fill="#1a1a1a"/><rect x="824.9" y="0" width="2" height="5" fill="#1a1a1a"/><rect x="871.3" y="0" width="2" height="5" fill="#1a1a1a"/><rect x="917.7" y="0" width="2" height="5" fill="#1a1a1a"/><rect x="964.1" y="0" width="2" height="5" fill="#1a1a1a"/><rect x="1010.4" y="0" width="2" height="5" fill="#1a1a1a"/><rect x="1056.8" y="0" width="2" height="5" fill="#1a1a1a"/><rect x="1103.2" y="0" width="2" height="5" fill="#1a1a1a"/><rect x="1149.6" y="0" width="2" height="5" fill="#1a1a1a"/><rect x="1195.9" y="0" width="2" height="5" fill="#1a1a1a"/><rect x="1242.3" y="0" width="2" height="5" fill="#1a1a1a"/><rect x="1288.7" y="0" width="2" height="5" fill="#1a1a1a"/><rect x="1335.1" y="0" width="2" height="5" fill="#1a1a1a"/><rect x="1381.4" y="0" width="2" height="5" fill="#1a1a1a"/><rect x="1427.8" y="0" width="2" height="5" fill="#1a1a1a"/><rect x="1474.2" y="0" width="2" height="5" fill="#1a1a1a"/><rect x="1520.6" y="0" width="2" height="5" fill="#1a1a1a"/><rect x="1566.9" y="0" width="2" height="5" fill="#1a1a1a"/><rect x="1613.3" y="0" width="2" height="5" fill="#1a1a1a"/><rect x="1659.7" y="0" width="2" height="5" fill="#1a1a1a"/><rect x="1706.1" y="0" width="2" height="5" fill="#1a1a1a"/><rect x="1752.4" y="0" width="2" height="5" fill="#1a1a1a"/><rect x="1798.8" y="0" width="2" height="5" fill="#1a1a1a"/><rect x="1845.2" y="0" width="2" height="5" fill="#1a1a1a"/><rect x="1891.6" y="0" width="2" height="5" fill="#1a1a1a"/><rect x="1937.9" y="0" width="2" height="5" fill="#1a1a1a"/><rect x="1984.3" y="0" width="2" height="5" fill="#1a1a1a"/><rect x="2030.7" y="0" width="2" height="5" fill="#1a1a1a"/><rect x="2077.1" y="0" width="2" height="5" fill="#1a1a1a"/><rect x="2123.4" y="0" width="2" height="5" fill="#1a1a1a"/><rect x="2169.8" y="0" width="2" height="5" fill="#1a1a1a"/><rect x="2216.2" y="0" width="2" height="5" fill="#1a1a1a"/><rect x="2262.5" y="0" width="2" height="5" fill="#1a1a1a"/><rect x="2308.9" y="0" width="2" height="5" fill="#1a1a1a"/><rect x="2355.3" y="0" width="2" height="5" fill="#1a1a1a"/><rect x="2401.7" y="0" width="2" height="5" fill="#1a1a1a"/><rect x="2448.0" y="0" width="2" height="5" fill="#1a1a1a"/></svg>
<div class="a" style="left:92px;top:1683px;width:3px;height:5px;background:#4772b3;"></div>
<svg style="left:3px;top:1654px" width="12" height="18"><path d="M2 2L9 9L2 16" fill="none" stroke="#7a7a7a" stroke-width="2"/></svg>
<svg style="left:2481px;top:1655px" width="12" height="18"><path d="M9 2L2 9L9 16" fill="none" stroke="#7a7a7a" stroke-width="2"/></svg>
<div class="a" style="left:0px;top:1688px;width:3024px;height:42px;background:#181818;"></div>
<svg style="left:23px;top:1695px" width="24" height="30" viewBox="0 0 24 30"><rect x="1.5" y="1.5" width="21" height="27" rx="6" fill="none" stroke="#9a9a9a" stroke-width="2"/><path d="M1 14V8Q1 1 8 1H11.5V14Z" fill="#9a9a9a"/></svg>
<div class="a t" style="left:68px;top:1693.5px;height:33px;line-height:33px;font-size:24px;color:#a0a0a0;"><span class="c">选择</span></div>
<svg style="left:445px;top:1695px" width="24" height="30" viewBox="0 0 24 30"><rect x="1.5" y="1.5" width="21" height="27" rx="6" fill="none" stroke="#9a9a9a" stroke-width="2"/><rect x="9" y="5" width="6" height="10" rx="2" fill="#9a9a9a"/></svg>
<div class="a t" style="left:491px;top:1693.5px;height:33px;line-height:33px;font-size:24px;color:#a0a0a0;"><span class="c">缩放视图</span></div>
<svg style="left:867px;top:1695px" width="24" height="30" viewBox="0 0 24 30"><rect x="1.5" y="1.5" width="21" height="27" rx="6" fill="none" stroke="#9a9a9a" stroke-width="2"/><path d="M12.5 1H16Q23 1 23 8V14H12.5Z" fill="#9a9a9a"/></svg>
<div class="a t" style="left:913px;top:1693.5px;height:33px;line-height:33px;font-size:24px;color:#a0a0a0;"><span class="c">套索选择</span></div>
<div class="a t" style="right:25px;text-align:right;top:1694.0px;height:32px;line-height:32px;font-size:23px;color:#8a8a8a;">4.1.1</div>
</div>
<script>
(function(){try{var c=document.createElement('canvas').getContext('2d');c.font='100px "Liberation Sans", sans-serif';
var a=c.measureText('文件').width,b=c.measureText('').width;
if(Math.abs(a-b)>2){var s=document.createElement('style');s.textContent='.c{font-size:1em;vertical-align:0}';document.head.appendChild(s);}}catch(e){}})();
</script>
</body></html>
